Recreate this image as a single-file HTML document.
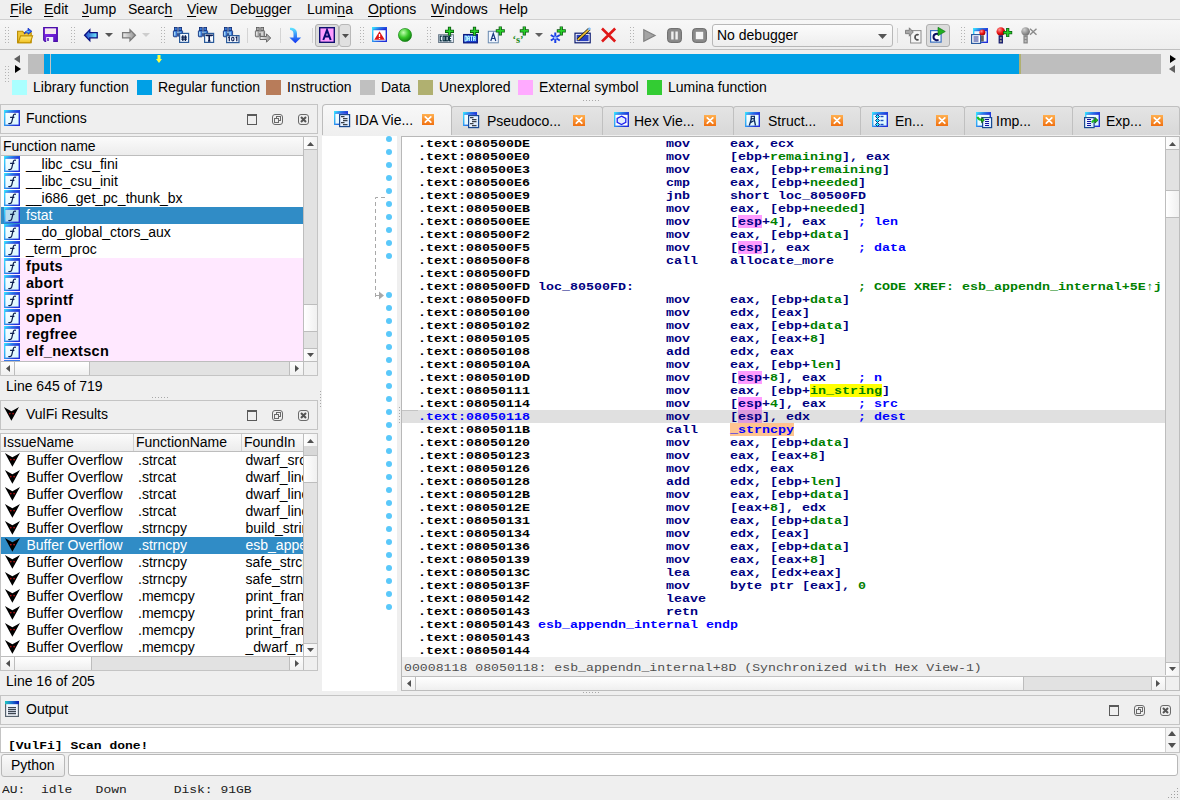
<!DOCTYPE html><html><head><meta charset="utf-8"><title>IDA</title><style>
html,body{margin:0;padding:0}
body{width:1180px;height:800px;background:#efefef;position:relative;overflow:hidden;font-family:"Liberation Sans",sans-serif;font-size:14px}
.t{position:absolute;white-space:pre;line-height:16px}
.b{position:absolute;box-sizing:border-box}
svg{position:absolute;overflow:visible}
.ln{position:absolute;left:0;height:13px;line-height:13px;white-space:pre;font-family:"Liberation Mono",monospace;font-weight:bold;font-size:13.333px;color:#000;transform:scaleY(.82);transform-origin:0 10px}
.mn,.op{color:#000080}.gv{color:#008000}.cm{color:#0000ff}.xr{color:#008000}.en{color:#0000ff}
.hl,.hl2{color:#000080}.yl{color:#008000}.or{color:#0000ff}
.cur{color:#0000ff}
u{text-decoration:underline;text-decoration-thickness:1px;text-underline-offset:1.5px}
</style></head><body>
<svg width="0" height="0" style="position:absolute"><defs>
<linearGradient id="winb" x1="0" y1="0" x2="1" y2="0.4"><stop offset="0" stop-color="#38e0ff"/><stop offset=".5" stop-color="#2a78e8"/><stop offset="1" stop-color="#2030d8"/></linearGradient>
<linearGradient id="winf" x1="0" y1="0" x2="1" y2="1"><stop offset="0" stop-color="#ffffff"/><stop offset="1" stop-color="#d4f6ff"/></linearGradient>
<linearGradient id="docf" x1="0" y1="0" x2="1" y2="1"><stop offset="0" stop-color="#ffffff"/><stop offset="1" stop-color="#cfe4ff"/></linearGradient>
<linearGradient id="arb" x1="0" y1="0" x2="1" y2="0"><stop offset="0" stop-color="#2040c8"/><stop offset="1" stop-color="#70f0ff"/></linearGradient>
<linearGradient id="arg" x1="0" y1="0" x2="1" y2="0"><stop offset="0" stop-color="#f0f0f0"/><stop offset="1" stop-color="#909090"/></linearGradient>
<linearGradient id="cls" x1="0" y1="0" x2="0" y2="1"><stop offset="0" stop-color="#ffb050"/><stop offset="1" stop-color="#f07010"/></linearGradient>
<linearGradient id="fold" x1="0" y1="0" x2="0" y2="1"><stop offset="0" stop-color="#ffec80"/><stop offset="1" stop-color="#f0c020"/></linearGradient>
<linearGradient id="sav" x1="0" y1="0" x2="1" y2="1"><stop offset="0" stop-color="#8a30f0"/><stop offset="1" stop-color="#5a10c0"/></linearGradient>
<linearGradient id="dwn" x1="0" y1="0" x2="0" y2="1"><stop offset="0" stop-color="#60e8ff"/><stop offset="1" stop-color="#1030f0"/></linearGradient>
<radialGradient id="grn" cx=".38" cy=".32" r=".7"><stop offset="0" stop-color="#c0ffb0"/><stop offset=".55" stop-color="#38c828"/><stop offset="1" stop-color="#108010"/></radialGradient>
<radialGradient id="red" cx=".35" cy=".3" r=".7"><stop offset="0" stop-color="#ff9090"/><stop offset=".6" stop-color="#e81010"/><stop offset="1" stop-color="#a00000"/></radialGradient>
<radialGradient id="gry" cx=".35" cy=".3" r=".7"><stop offset="0" stop-color="#d0d0d0"/><stop offset="1" stop-color="#707070"/></radialGradient>
</defs></svg>
<div class="b" style="left:0px;top:19px;width:1180px;height:1px;background:#d0d0d0"></div>
<div class="t" style="left:10px;top:1.15px;font-size:14px;color:#000;font-weight:normal;font-family:'Liberation Sans', sans-serif;"><u>F</u>ile</div>
<div class="t" style="left:44px;top:1.15px;font-size:14px;color:#000;font-weight:normal;font-family:'Liberation Sans', sans-serif;"><u>E</u>dit</div>
<div class="t" style="left:82px;top:1.15px;font-size:14px;color:#000;font-weight:normal;font-family:'Liberation Sans', sans-serif;"><u>J</u>ump</div>
<div class="t" style="left:128px;top:1.15px;font-size:14px;color:#000;font-weight:normal;font-family:'Liberation Sans', sans-serif;">Searc<u>h</u></div>
<div class="t" style="left:187px;top:1.15px;font-size:14px;color:#000;font-weight:normal;font-family:'Liberation Sans', sans-serif;"><u>V</u>iew</div>
<div class="t" style="left:230px;top:1.15px;font-size:14px;color:#000;font-weight:normal;font-family:'Liberation Sans', sans-serif;">Deb<u>u</u>gger</div>
<div class="t" style="left:307px;top:1.15px;font-size:14px;color:#000;font-weight:normal;font-family:'Liberation Sans', sans-serif;">Lumi<u>n</u>a</div>
<div class="t" style="left:368px;top:1.15px;font-size:14px;color:#000;font-weight:normal;font-family:'Liberation Sans', sans-serif;"><u>O</u>ptions</div>
<div class="t" style="left:431px;top:1.15px;font-size:14px;color:#000;font-weight:normal;font-family:'Liberation Sans', sans-serif;"><u>W</u>indows</div>
<div class="t" style="left:499px;top:1.15px;font-size:14px;color:#000;font-weight:normal;font-family:'Liberation Sans', sans-serif;">Help</div>
<div class="b" style="left:0px;top:20px;width:1180px;height:29px;background:linear-gradient(#f7f7f7,#eeeeee)"></div>
<div class="b" style="left:0px;top:49px;width:1180px;height:1px;background:#bfbfbf"></div>
<div class="b" style="left:5px;top:27px;width:1px;height:1px;background:#b4b4b4"></div>
<div class="b" style="left:8px;top:27px;width:1px;height:1px;background:#b4b4b4"></div>
<div class="b" style="left:5px;top:30px;width:1px;height:1px;background:#b4b4b4"></div>
<div class="b" style="left:8px;top:30px;width:1px;height:1px;background:#b4b4b4"></div>
<div class="b" style="left:5px;top:33px;width:1px;height:1px;background:#b4b4b4"></div>
<div class="b" style="left:8px;top:33px;width:1px;height:1px;background:#b4b4b4"></div>
<div class="b" style="left:5px;top:36px;width:1px;height:1px;background:#b4b4b4"></div>
<div class="b" style="left:8px;top:36px;width:1px;height:1px;background:#b4b4b4"></div>
<div class="b" style="left:5px;top:39px;width:1px;height:1px;background:#b4b4b4"></div>
<div class="b" style="left:8px;top:39px;width:1px;height:1px;background:#b4b4b4"></div>
<div class="b" style="left:5px;top:42px;width:1px;height:1px;background:#b4b4b4"></div>
<div class="b" style="left:8px;top:42px;width:1px;height:1px;background:#b4b4b4"></div>
<div class="b" style="left:71px;top:27px;width:1px;height:1px;background:#b4b4b4"></div>
<div class="b" style="left:74px;top:27px;width:1px;height:1px;background:#b4b4b4"></div>
<div class="b" style="left:71px;top:30px;width:1px;height:1px;background:#b4b4b4"></div>
<div class="b" style="left:74px;top:30px;width:1px;height:1px;background:#b4b4b4"></div>
<div class="b" style="left:71px;top:33px;width:1px;height:1px;background:#b4b4b4"></div>
<div class="b" style="left:74px;top:33px;width:1px;height:1px;background:#b4b4b4"></div>
<div class="b" style="left:71px;top:36px;width:1px;height:1px;background:#b4b4b4"></div>
<div class="b" style="left:74px;top:36px;width:1px;height:1px;background:#b4b4b4"></div>
<div class="b" style="left:71px;top:39px;width:1px;height:1px;background:#b4b4b4"></div>
<div class="b" style="left:74px;top:39px;width:1px;height:1px;background:#b4b4b4"></div>
<div class="b" style="left:71px;top:42px;width:1px;height:1px;background:#b4b4b4"></div>
<div class="b" style="left:74px;top:42px;width:1px;height:1px;background:#b4b4b4"></div>
<div class="b" style="left:161px;top:27px;width:1px;height:1px;background:#b4b4b4"></div>
<div class="b" style="left:164px;top:27px;width:1px;height:1px;background:#b4b4b4"></div>
<div class="b" style="left:161px;top:30px;width:1px;height:1px;background:#b4b4b4"></div>
<div class="b" style="left:164px;top:30px;width:1px;height:1px;background:#b4b4b4"></div>
<div class="b" style="left:161px;top:33px;width:1px;height:1px;background:#b4b4b4"></div>
<div class="b" style="left:164px;top:33px;width:1px;height:1px;background:#b4b4b4"></div>
<div class="b" style="left:161px;top:36px;width:1px;height:1px;background:#b4b4b4"></div>
<div class="b" style="left:164px;top:36px;width:1px;height:1px;background:#b4b4b4"></div>
<div class="b" style="left:161px;top:39px;width:1px;height:1px;background:#b4b4b4"></div>
<div class="b" style="left:164px;top:39px;width:1px;height:1px;background:#b4b4b4"></div>
<div class="b" style="left:161px;top:42px;width:1px;height:1px;background:#b4b4b4"></div>
<div class="b" style="left:164px;top:42px;width:1px;height:1px;background:#b4b4b4"></div>
<div class="b" style="left:360px;top:27px;width:1px;height:1px;background:#b4b4b4"></div>
<div class="b" style="left:363px;top:27px;width:1px;height:1px;background:#b4b4b4"></div>
<div class="b" style="left:360px;top:30px;width:1px;height:1px;background:#b4b4b4"></div>
<div class="b" style="left:363px;top:30px;width:1px;height:1px;background:#b4b4b4"></div>
<div class="b" style="left:360px;top:33px;width:1px;height:1px;background:#b4b4b4"></div>
<div class="b" style="left:363px;top:33px;width:1px;height:1px;background:#b4b4b4"></div>
<div class="b" style="left:360px;top:36px;width:1px;height:1px;background:#b4b4b4"></div>
<div class="b" style="left:363px;top:36px;width:1px;height:1px;background:#b4b4b4"></div>
<div class="b" style="left:360px;top:39px;width:1px;height:1px;background:#b4b4b4"></div>
<div class="b" style="left:363px;top:39px;width:1px;height:1px;background:#b4b4b4"></div>
<div class="b" style="left:360px;top:42px;width:1px;height:1px;background:#b4b4b4"></div>
<div class="b" style="left:363px;top:42px;width:1px;height:1px;background:#b4b4b4"></div>
<div class="b" style="left:427px;top:27px;width:1px;height:1px;background:#b4b4b4"></div>
<div class="b" style="left:430px;top:27px;width:1px;height:1px;background:#b4b4b4"></div>
<div class="b" style="left:427px;top:30px;width:1px;height:1px;background:#b4b4b4"></div>
<div class="b" style="left:430px;top:30px;width:1px;height:1px;background:#b4b4b4"></div>
<div class="b" style="left:427px;top:33px;width:1px;height:1px;background:#b4b4b4"></div>
<div class="b" style="left:430px;top:33px;width:1px;height:1px;background:#b4b4b4"></div>
<div class="b" style="left:427px;top:36px;width:1px;height:1px;background:#b4b4b4"></div>
<div class="b" style="left:430px;top:36px;width:1px;height:1px;background:#b4b4b4"></div>
<div class="b" style="left:427px;top:39px;width:1px;height:1px;background:#b4b4b4"></div>
<div class="b" style="left:430px;top:39px;width:1px;height:1px;background:#b4b4b4"></div>
<div class="b" style="left:427px;top:42px;width:1px;height:1px;background:#b4b4b4"></div>
<div class="b" style="left:430px;top:42px;width:1px;height:1px;background:#b4b4b4"></div>
<div class="b" style="left:630px;top:27px;width:1px;height:1px;background:#b4b4b4"></div>
<div class="b" style="left:633px;top:27px;width:1px;height:1px;background:#b4b4b4"></div>
<div class="b" style="left:630px;top:30px;width:1px;height:1px;background:#b4b4b4"></div>
<div class="b" style="left:633px;top:30px;width:1px;height:1px;background:#b4b4b4"></div>
<div class="b" style="left:630px;top:33px;width:1px;height:1px;background:#b4b4b4"></div>
<div class="b" style="left:633px;top:33px;width:1px;height:1px;background:#b4b4b4"></div>
<div class="b" style="left:630px;top:36px;width:1px;height:1px;background:#b4b4b4"></div>
<div class="b" style="left:633px;top:36px;width:1px;height:1px;background:#b4b4b4"></div>
<div class="b" style="left:630px;top:39px;width:1px;height:1px;background:#b4b4b4"></div>
<div class="b" style="left:633px;top:39px;width:1px;height:1px;background:#b4b4b4"></div>
<div class="b" style="left:630px;top:42px;width:1px;height:1px;background:#b4b4b4"></div>
<div class="b" style="left:633px;top:42px;width:1px;height:1px;background:#b4b4b4"></div>
<div class="b" style="left:961px;top:27px;width:1px;height:1px;background:#b4b4b4"></div>
<div class="b" style="left:964px;top:27px;width:1px;height:1px;background:#b4b4b4"></div>
<div class="b" style="left:961px;top:30px;width:1px;height:1px;background:#b4b4b4"></div>
<div class="b" style="left:964px;top:30px;width:1px;height:1px;background:#b4b4b4"></div>
<div class="b" style="left:961px;top:33px;width:1px;height:1px;background:#b4b4b4"></div>
<div class="b" style="left:964px;top:33px;width:1px;height:1px;background:#b4b4b4"></div>
<div class="b" style="left:961px;top:36px;width:1px;height:1px;background:#b4b4b4"></div>
<div class="b" style="left:964px;top:36px;width:1px;height:1px;background:#b4b4b4"></div>
<div class="b" style="left:961px;top:39px;width:1px;height:1px;background:#b4b4b4"></div>
<div class="b" style="left:964px;top:39px;width:1px;height:1px;background:#b4b4b4"></div>
<div class="b" style="left:961px;top:42px;width:1px;height:1px;background:#b4b4b4"></div>
<div class="b" style="left:964px;top:42px;width:1px;height:1px;background:#b4b4b4"></div>
<div class="b" style="left:247px;top:28px;width:1px;height:15px;background:#d4d4d4"></div>
<div class="b" style="left:280px;top:28px;width:1px;height:15px;background:#d4d4d4"></div>
<div class="b" style="left:312px;top:28px;width:1px;height:15px;background:#d4d4d4"></div>
<div class="b" style="left:897px;top:28px;width:1px;height:15px;background:#d4d4d4"></div>
<svg style="left:17px;top:27px" width="17" height="17" viewBox="0 0 17 17"><path d="M0.6 4.3h5l1.2 1.5h7.4v10H0.6z" fill="#f0c838" stroke="#b88a00" stroke-width="1.1"/><path d="M3.6 8.9h12l-2.3 6.9H1.2z" fill="url(#fold)" stroke="#c09000" stroke-width="1.1"/><path d="M7.3 7C7.5 4.8 9.2 3.8 11 3.8V1.2L14.9 4.3L11 7.3V5.6C9.5 5.6 8.3 6 7.3 7z" fill="#2a60f0" stroke="#0a20b8" stroke-width=".7"/><path d="M9.5 4.8h3" stroke="#70f0ff" stroke-width="1"/></svg>
<svg style="left:43px;top:27px" width="15" height="15" viewBox="0 0 15 15"><path d="M0.7 0.7H14.3V14.3H2L0.7 13z" fill="url(#sav)" stroke="#4a10a8" stroke-width="1.2"/><rect x="2" y="1.4" width="11" height="5.6" fill="#f6e8ec"/><rect x="3.2" y="10" width="7" height="5" fill="#eef0fa"/><rect x="4.2" y="11" width="1.6" height="3" fill="#5a20b0"/></svg>
<svg style="left:84px;top:29px" width="14" height="13" viewBox="0 0 14 13"><path d="M0.6 6.2L5.8 0.8V3.6H13.2V8.8H5.8V11.6Z" fill="url(#arb)" stroke="#0a1080" stroke-width="1.3"/></svg>
<svg style="left:105px;top:33px" width="8" height="4" viewBox="0 0 8 4"><path d="M0 0h8L4 4z" fill="#555"/></svg>
<svg style="left:122px;top:29px" width="14" height="13" viewBox="0 0 14 13"><path d="M13.4 6.2L8 0.8V3.6H0.6V8.8H8V11.6Z" fill="url(#arg)" stroke="#7a7a7a" stroke-width="1.3"/></svg>
<svg style="left:142px;top:33px" width="8" height="4" viewBox="0 0 8 4"><path d="M0 0h8L4 4z" fill="#cdcdcd"/></svg>
<svg style="left:173px;top:27px" width="17" height="17" viewBox="0 0 17 17"><rect x="1.4" y="0.4" width="2.8" height="3.2" fill="#3a78d8" stroke="#0e2a70" stroke-width=".8"/><rect x="5.8" y="0.4" width="2.8" height="3.2" fill="#3a78d8" stroke="#0e2a70" stroke-width=".8"/><rect x="0.4" y="3.6" width="4" height="6.2" rx=".8" fill="#3a78d8" stroke="#0e2a70" stroke-width=".8"/><rect x="5.6" y="3.6" width="4" height="6.2" rx=".8" fill="#3a78d8" stroke="#0e2a70" stroke-width=".8"/><rect x="1.2" y="4.8" width="1.2" height="3.8" fill="#b8ecff"/><rect x="6.4" y="4.8" width="1.2" height="3.8" fill="#b8ecff"/><rect x="4.4" y="4.6" width="1.2" height="1.6" fill="#b8ecff"/><rect x="6.6" y="6.4" width="9" height="9" fill="#f2f8ff" stroke="#2a5a9a" stroke-width="1.2"/><path d="M9.8 8.3V14M12.4 8.3V14M8.3 10.2h5.6M8.3 12.2h5.6" stroke="#0a2050" stroke-width="1.3"/></svg>
<svg style="left:198px;top:27px" width="17" height="17" viewBox="0 0 17 17"><rect x="1.4" y="0.4" width="2.8" height="3.2" fill="#3a78d8" stroke="#0e2a70" stroke-width=".8"/><rect x="5.8" y="0.4" width="2.8" height="3.2" fill="#3a78d8" stroke="#0e2a70" stroke-width=".8"/><rect x="0.4" y="3.6" width="4" height="6.2" rx=".8" fill="#3a78d8" stroke="#0e2a70" stroke-width=".8"/><rect x="5.6" y="3.6" width="4" height="6.2" rx=".8" fill="#3a78d8" stroke="#0e2a70" stroke-width=".8"/><rect x="1.2" y="4.8" width="1.2" height="3.8" fill="#b8ecff"/><rect x="6.4" y="4.8" width="1.2" height="3.8" fill="#b8ecff"/><rect x="4.4" y="4.6" width="1.2" height="1.6" fill="#b8ecff"/><rect x="6.6" y="6.4" width="9" height="9" fill="#f2f8ff" stroke="#2a5a9a" stroke-width="1.2"/><path d="M8.3 8.9V8.4h5.8v.5M11.2 8.4v5.6M10 14h2.4" fill="none" stroke="#0a1a50" stroke-width="1.6"/></svg>
<svg style="left:223px;top:27px" width="17" height="17" viewBox="0 0 17 17"><rect x="1.4" y="0.4" width="2.8" height="3.2" fill="#3a78d8" stroke="#0e2a70" stroke-width=".8"/><rect x="5.8" y="0.4" width="2.8" height="3.2" fill="#3a78d8" stroke="#0e2a70" stroke-width=".8"/><rect x="0.4" y="3.6" width="4" height="6.2" rx=".8" fill="#3a78d8" stroke="#0e2a70" stroke-width=".8"/><rect x="5.6" y="3.6" width="4" height="6.2" rx=".8" fill="#3a78d8" stroke="#0e2a70" stroke-width=".8"/><rect x="1.2" y="4.8" width="1.2" height="3.8" fill="#b8ecff"/><rect x="6.4" y="4.8" width="1.2" height="3.8" fill="#b8ecff"/><rect x="4.4" y="4.6" width="1.2" height="1.6" fill="#b8ecff"/><rect x="3.6" y="8.6" width="12.4" height="7" fill="#f2f8ff" stroke="#2a5a9a" stroke-width="1.2"/><path d="M5.2 10.6L6.3 10V14.2M12.7 10.6L13.8 10V14.2" fill="none" stroke="#0a1a50" stroke-width="1.2"/><ellipse cx="9.8" cy="12.1" rx="1.2" ry="1.9" fill="none" stroke="#0a1a50" stroke-width="1.1"/></svg>
<svg style="left:255px;top:27px" width="17" height="17" viewBox="0 0 17 17"><rect x="1.4" y="0.4" width="2.8" height="3.2" fill="#a8a8a8" stroke="#5a5a5a" stroke-width=".8"/><rect x="5.8" y="0.4" width="2.8" height="3.2" fill="#a8a8a8" stroke="#5a5a5a" stroke-width=".8"/><rect x="0.4" y="3.6" width="4" height="6.2" rx=".8" fill="#a8a8a8" stroke="#5a5a5a" stroke-width=".8"/><rect x="5.6" y="3.6" width="4" height="6.2" rx=".8" fill="#a8a8a8" stroke="#5a5a5a" stroke-width=".8"/><rect x="1.2" y="4.8" width="1.2" height="3.8" fill="#f0f0f0"/><rect x="6.4" y="4.8" width="1.2" height="3.8" fill="#f0f0f0"/><rect x="4.4" y="4.6" width="1.2" height="1.6" fill="#f0f0f0"/><path d="M5 9.5h6.5V6.8L15.7 11L11.5 15.2V12.5H5z" fill="url(#arg)" stroke="#6a6a6a" stroke-width="1"/></svg>
<svg style="left:289px;top:27px" width="13" height="17" viewBox="0 0 13 17"><path d="M1 0.8C5.5 0.8 8 2.8 8 6.5V10.5H12.2L6.3 16.2L0.4 10.5H4.5V7C4.5 4.5 3.3 3 1 2.8z" fill="url(#dwn)"/></svg>
<div class="b" style="left:315px;top:24px;width:24px;height:23px;background:#dcdcdc;border:1px solid #b0b0b0;border-radius:3px"></div>
<svg style="left:319px;top:27px" width="16" height="16" viewBox="0 0 16 16"><rect x="0.7" y="0.7" width="14.6" height="14.6" fill="#ff9cff" stroke="#101070" stroke-width="1.4"/><path d="M4.3 13L8 3.2L11.7 13M5.7 9.6h4.6" fill="none" stroke="#0a0a70" stroke-width="2"/></svg>
<div class="b" style="left:339px;top:24px;width:12px;height:23px;background:#e0e0e0;border:1px solid #b8b8b8;border-radius:3px"></div>
<svg style="left:342px;top:34px" width="7" height="4" viewBox="0 0 7 4"><path d="M0 0h7L3.5 4z" fill="#505050"/></svg>
<svg style="left:372px;top:27px" width="15" height="15" viewBox="0 0 15 15"><rect x="0.7" y="0.7" width="13.6" height="13.6" fill="#fff" stroke="url(#winb)" stroke-width="1.4"/><rect x="1" y="1" width="13" height="2.2" fill="url(#winb)"/><path d="M7.5 4.3L12.8 12.8H2.2z" fill="#e01818"/><path d="M7.5 7v3M7.5 11v1" stroke="#fff" stroke-width="1.3"/></svg>
<svg style="left:398px;top:28px" width="14" height="14" viewBox="0 0 14 14"><circle cx="7" cy="7" r="6.6" fill="url(#grn)" stroke="#108010" stroke-width=".6"/></svg>
<svg style="left:437px;top:27px" width="18" height="17" viewBox="0 0 18 17"><rect x="1.6" y="7.7" width="14.8" height="7.8" fill="#eef4ff" stroke="#6a7a88" stroke-width="1"/><path d="M4.9 9.1H3.2V13.9H4.9M6.1 9.1H8V13.9H6.1ZM9 9.1H10.4Q11.2 9.1 11.2 10V13Q11.2 13.9 10.4 13.9H9ZM14.4 9.1H12.4V13.9H14.4M12.4 11.5H14" fill="none" stroke="#0a3040" stroke-width="1.2"/><path d="M12.5 -0.20000000000000018v9M8.0 4.3h9" stroke="#0a5a10" stroke-width="3.2"/><path d="M12.5 0.5v7.6M8.7 4.3h7.6" stroke="#28d028" stroke-width="1.6"/></svg>
<svg style="left:462px;top:27px" width="18" height="17" viewBox="0 0 18 17"><rect x="1.7" y="7.6" width="13.6" height="8.2" fill="#1a40d0" stroke="#0a1a80" stroke-width="1.3"/><path d="M3 9.1V13.9H3.9Q4.7 13.9 4.7 13V10Q4.7 9.1 3.9 9.1ZM5.8 13.9V10Q5.8 9.1 6.6 9.1Q7.4 9.1 7.4 10V13.9M5.8 11.6H7.4M8.3 9.2H10.7M9.5 9.2V13.9M11.6 13.9V10Q11.6 9.1 12.4 9.1Q13.2 9.1 13.2 10V13.9M11.6 11.6H13.2" fill="none" stroke="#b0f4ff" stroke-width="1.1"/><path d="M12.5 -0.20000000000000018v9M8.0 4.3h9" stroke="#0a5a10" stroke-width="3.2"/><path d="M12.5 0.5v7.6M8.7 4.3h7.6" stroke="#28d028" stroke-width="1.6"/></svg>
<svg style="left:487px;top:27px" width="18" height="17" viewBox="0 0 18 17"><rect x="1.3" y="4.3" width="10" height="11.5" fill="#f0f6ff" stroke="#6a8ab0" stroke-width="1"/><path d="M3.8 14L6.3 6.5L8.8 14M4.6 11.5h3.4" fill="none" stroke="#1a3a80" stroke-width="1.2"/><path d="M13.3 -0.6000000000000001v9M8.8 3.9h9" stroke="#0a5a10" stroke-width="3.2"/><path d="M13.3 0.10000000000000009v7.6M9.5 3.9h7.6" stroke="#28d028" stroke-width="1.6"/></svg>
<svg style="left:512px;top:27px" width="18" height="17" viewBox="0 0 18 17"><text x="6" y="15.6" font-size="10.5" font-family="Liberation Serif" font-weight="bold" text-anchor="middle" fill="#208a20">‘s’</text><path d="M12.3 -0.6000000000000001v9M7.800000000000001 3.9h9" stroke="#0a5a10" stroke-width="3.2"/><path d="M12.3 0.10000000000000009v7.6M8.5 3.9h7.6" stroke="#28d028" stroke-width="1.6"/></svg>
<svg style="left:535px;top:33px" width="8" height="4" viewBox="0 0 8 4"><path d="M0 0h8L4 4z" fill="#606060"/></svg>
<svg style="left:549px;top:27px" width="18" height="17" viewBox="0 0 18 17"><path d="M6.3 5.5v10.5M1.8 8l9 5.5M1.8 13.5l9-5.5" stroke="#1a40e8" stroke-width="2"/><circle cx="6.3" cy="10.8" r="1.5" fill="#a0c0ff"/><path d="M12.3 -0.6000000000000001v9M7.800000000000001 3.9h9" stroke="#0a5a10" stroke-width="3.2"/><path d="M12.3 0.10000000000000009v7.6M8.5 3.9h7.6" stroke="#28d028" stroke-width="1.6"/></svg>
<svg style="left:574px;top:27px" width="18" height="17" viewBox="0 0 18 17"><rect x="1" y="6.2" width="15.2" height="9.6" fill="#fff" stroke="#0a1a70" stroke-width="1.2"/><rect x="2.6" y="7.8" width="12" height="6.4" fill="#2a40c0"/><path d="M3.8 12.8L15.5 1.8" stroke="#101010" stroke-width="3"/><path d="M3.8 12.8L15.5 1.8" stroke="#f0c030" stroke-width="1.8"/><path d="M14.2 3L16.3 1" stroke="#80c0ff" stroke-width="2"/></svg>
<svg style="left:600px;top:27px" width="17" height="16" viewBox="0 0 17 16"><path d="M2 1.5L15.2 14.5M15.2 1.5L2 14.5" stroke="#e01818" stroke-width="2.6"/></svg>
<svg style="left:643px;top:29px" width="13" height="13" viewBox="0 0 13 13"><path d="M0.8 0.8L12 6.5L0.8 12.2z" fill="#a4a4a4" stroke="#808080" stroke-width="1.2"/></svg>
<svg style="left:667px;top:28px" width="15" height="15" viewBox="0 0 15 15"><rect x="0.6" y="0.6" width="13.8" height="13.8" rx="3" fill="#8a8a8a" stroke="#6a6a6a"/><rect x="4.2" y="3.5" width="2.4" height="8" fill="#f0f0f0"/><rect x="8.4" y="3.5" width="2.4" height="8" fill="#f0f0f0"/></svg>
<svg style="left:692px;top:28px" width="15" height="15" viewBox="0 0 15 15"><rect x="0.6" y="0.6" width="13.8" height="13.8" rx="3" fill="#8a8a8a" stroke="#6a6a6a"/><rect x="3.8" y="3.8" width="7.4" height="7.4" fill="#f6f6f6"/></svg>
<div class="b" style="left:712px;top:24px;width:181px;height:23px;background:linear-gradient(#fcfcfc,#ededed);border:1px solid #b8b8b8;border-radius:3px"></div>
<div class="t" style="left:717px;top:27.15px;font-size:14px;color:#000;font-weight:normal;font-family:'Liberation Sans', sans-serif;">No debugger</div>
<svg style="left:878px;top:34px" width="9" height="5" viewBox="0 0 9 5"><path d="M0 0h9L4.5 5z" fill="#555"/></svg>
<svg style="left:905px;top:27px" width="17" height="17" viewBox="0 0 17 17"><rect x="5.6" y="3.6" width="10.4" height="12.4" fill="#f6f6f6" stroke="#8a8a8a" stroke-width="1"/><path d="M13.5 8.2C12.8 7.3 10 7.2 10 10.3C10 13.2 12.8 13.2 13.5 12.4" fill="none" stroke="#505050" stroke-width="1.8"/><path d="M0.5 3.3h3.8V0.8L8.3 5L4.3 9.2V6.7H0.5z" fill="#a8a8a8" stroke="#707070" stroke-width=".8"/></svg>
<div class="b" style="left:926px;top:24px;width:24px;height:23px;background:#dcdcdc;border:1px solid #b0b0b0;border-radius:3px"></div>
<svg style="left:930px;top:27px" width="16" height="16" viewBox="0 0 16 16"><rect x="0.6" y="3.6" width="10.5" height="11.5" fill="#fff" stroke="#3a70c0" stroke-width="1.2"/><path d="M8.5 7.5C7.8 6.5 3.5 6.3 3.5 10C3.5 13.5 7.8 13.5 8.5 12.5" fill="none" stroke="#0a1060" stroke-width="2"/><path d="M8 0.3L15.3 4.5L8 8.8z" fill="#20b020" stroke="#0a7010" stroke-width=".6"/></svg>
<svg style="left:971px;top:27px" width="17" height="17" viewBox="0 0 17 17"><rect x="2.7" y="1.7" width="13.6" height="13.6" fill="#f0f8ff" stroke="url(#winb)" stroke-width="1.4"/><rect x="3" y="2" width="13" height="2.2" fill="url(#winb)"/><rect x="0.6" y="7.6" width="9" height="8.8" fill="#fff" stroke="#2a5aa0" stroke-width="1.2"/><path d="M2.5 10h5M2.5 12h5M2.5 14h5" stroke="#1a2a90"/><circle cx="11.4" cy="5.5" r="3" fill="url(#red)"/><rect x="10" y="8.5" width="2.8" height="6" fill="#606060"/></svg>
<svg style="left:996px;top:27px" width="17" height="17" viewBox="0 0 17 17"><circle cx="4.8" cy="4.5" r="4.3" fill="url(#red)"/><rect x="2.6" y="8.3" width="4.4" height="8.2" fill="#1a2070"/><circle cx="4.8" cy="11" r="1.1" fill="#999"/><circle cx="4.8" cy="14.2" r="1.1" fill="#999"/><path d="M11.7 1.0999999999999996v9M7.199999999999999 5.6h9" stroke="#0a5a10" stroke-width="3.2"/><path d="M11.7 1.7999999999999998v7.6M7.8999999999999995 5.6h7.6" stroke="#28d028" stroke-width="1.6"/></svg>
<svg style="left:1021px;top:27px" width="17" height="17" viewBox="0 0 17 17"><circle cx="4.6" cy="4.5" r="4.3" fill="url(#gry)"/><rect x="2.4" y="8.3" width="4.4" height="8.2" fill="#8a8a8a"/><circle cx="4.6" cy="11" r="1.1" fill="#bdbdbd"/><circle cx="4.6" cy="14.2" r="1.1" fill="#bdbdbd"/><path d="M9 1.8l6.5 6M15.5 1.8l-6.5 6" stroke="#8a8a8a" stroke-width="1.4"/></svg>
<div class="b" style="left:5px;top:66px;width:1px;height:1px;background:#b4b4b4"></div>
<div class="b" style="left:8px;top:66px;width:1px;height:1px;background:#b4b4b4"></div>
<div class="b" style="left:5px;top:69px;width:1px;height:1px;background:#b4b4b4"></div>
<div class="b" style="left:8px;top:69px;width:1px;height:1px;background:#b4b4b4"></div>
<div class="b" style="left:5px;top:72px;width:1px;height:1px;background:#b4b4b4"></div>
<div class="b" style="left:8px;top:72px;width:1px;height:1px;background:#b4b4b4"></div>
<div class="b" style="left:5px;top:75px;width:1px;height:1px;background:#b4b4b4"></div>
<div class="b" style="left:8px;top:75px;width:1px;height:1px;background:#b4b4b4"></div>
<div class="b" style="left:5px;top:78px;width:1px;height:1px;background:#b4b4b4"></div>
<div class="b" style="left:8px;top:78px;width:1px;height:1px;background:#b4b4b4"></div>
<div class="b" style="left:5px;top:81px;width:1px;height:1px;background:#b4b4b4"></div>
<div class="b" style="left:8px;top:81px;width:1px;height:1px;background:#b4b4b4"></div>
<svg style="left:14px;top:55px" width="6" height="8" viewBox="0 0 6 8"><path d="M6 0V8L0 4z" fill="#606060"/></svg>
<svg style="left:15px;top:65px" width="6" height="8" viewBox="0 0 6 8"><path d="M0 0V8L6 4z" fill="#000"/></svg>
<div class="b" style="left:28px;top:54px;width:16px;height:20px;background:#bebebe"></div>
<div class="b" style="left:44px;top:54px;width:975px;height:20px;background:#00a0e6"></div>
<div class="b" style="left:50px;top:54px;width:1px;height:20px;background:#c4c4c4"></div>
<div class="b" style="left:43px;top:54px;width:1px;height:20px;background:#c8b8b0"></div>
<div class="b" style="left:1019px;top:54px;width:2px;height:20px;background:#b0b070"></div>
<div class="b" style="left:1021px;top:54px;width:140px;height:20px;background:#bebebe"></div>
<svg style="left:156px;top:55px" width="6" height="8" viewBox="0 0 6 8"><path d="M1.5 0h3v4h1.5L3 8L0 4h1.5z" fill="#ffff40"/></svg>
<svg style="left:1170px;top:55px" width="6" height="8" viewBox="0 0 6 8"><path d="M0 0V8L6 4z" fill="#000"/></svg>
<svg style="left:1169px;top:65px" width="6" height="8" viewBox="0 0 6 8"><path d="M6 0V8L0 4z" fill="#606060"/></svg>
<div class="b" style="left:12px;top:80px;width:15px;height:15px;background:#aaffff"></div>
<div class="t" style="left:33px;top:79.15px;font-size:14px;color:#000;font-weight:normal;font-family:'Liberation Sans', sans-serif;">Library function</div>
<div class="b" style="left:137px;top:80px;width:15px;height:15px;background:#00a0e6"></div>
<div class="t" style="left:158px;top:79.15px;font-size:14px;color:#000;font-weight:normal;font-family:'Liberation Sans', sans-serif;">Regular function</div>
<div class="b" style="left:266px;top:80px;width:15px;height:15px;background:#b87c5a"></div>
<div class="t" style="left:287px;top:79.15px;font-size:14px;color:#000;font-weight:normal;font-family:'Liberation Sans', sans-serif;">Instruction</div>
<div class="b" style="left:360px;top:80px;width:15px;height:15px;background:#c0c0c0"></div>
<div class="t" style="left:381px;top:79.15px;font-size:14px;color:#000;font-weight:normal;font-family:'Liberation Sans', sans-serif;">Data</div>
<div class="b" style="left:418px;top:80px;width:15px;height:15px;background:#b0b070"></div>
<div class="t" style="left:439px;top:79.15px;font-size:14px;color:#000;font-weight:normal;font-family:'Liberation Sans', sans-serif;">Unexplored</div>
<div class="b" style="left:518px;top:80px;width:15px;height:15px;background:#ffaaff"></div>
<div class="t" style="left:539px;top:79.15px;font-size:14px;color:#000;font-weight:normal;font-family:'Liberation Sans', sans-serif;">External symbol</div>
<div class="b" style="left:647px;top:80px;width:15px;height:15px;background:#33cc33"></div>
<div class="t" style="left:668px;top:79.15px;font-size:14px;color:#000;font-weight:normal;font-family:'Liberation Sans', sans-serif;">Lumina function</div>
<div class="b" style="left:0px;top:104px;width:318px;height:30px;background:#efefef;border:1px solid #c4c4c4"></div>
<svg style="left:4px;top:110px" width="16" height="16" viewBox="0 0 16 16"><rect x="0.7" y="0.7" width="14.6" height="14.6" fill="url(#winf)" stroke="url(#winb)" stroke-width="1.4"/><rect x="1" y="1" width="14" height="1.8" fill="url(#winb)"/><path d="M11.9 4.4C10.7 3.7 9.7 4.3 9.4 5.4L7.7 12.1C7.4 13.3 6.2 13.8 4.3 13.5M6.1 7.4H10.4" fill="none" stroke="#0e2050" stroke-width="1.25"/></svg>
<div class="t" style="left:26px;top:110.15px;font-size:14px;color:#000;font-weight:normal;font-family:'Liberation Sans', sans-serif;">Functions</div>
<svg style="left:247px;top:114px" width="10" height="11" viewBox="0 0 10 11"><rect x="0.5" y="0.5" width="9" height="10" fill="none" stroke="#5a5a5a"/><rect x="0" y="0" width="10" height="2" fill="#5a5a5a"/></svg><svg style="left:272px;top:114px" width="11" height="11" viewBox="0 0 11 11"><rect x="0.5" y="0.5" width="10" height="10" rx="2.5" fill="none" stroke="#6a6a6a"/><rect x="4.5" y="2.5" width="4" height="4" fill="none" stroke="#6a6a6a"/><rect x="2.5" y="4.5" width="4" height="4" fill="#efefef" stroke="#6a6a6a"/></svg><svg style="left:298px;top:114px" width="11" height="11" viewBox="0 0 11 11"><rect x="0.5" y="0.5" width="10" height="10" rx="2.5" fill="none" stroke="#6a6a6a"/><path d="M3 3L8 8M8 3L3 8" stroke="#555" stroke-width="2"/></svg>
<div class="b" style="left:0px;top:136px;width:318px;height:240px;background:#fff;border:1px solid #c4c4c4"></div>
<div class="b" style="left:1px;top:137px;width:303px;height:19px;background:linear-gradient(#fbfbfb,#ececec);border-bottom:1px solid #bdbdbd"></div>
<div class="t" style="left:3px;top:138.15px;font-size:14px;color:#000;font-weight:normal;font-family:'Liberation Sans', sans-serif;">Function name</div>
<svg style="left:4px;top:156px" width="16" height="16" viewBox="0 0 16 16"><rect x="0.7" y="0.7" width="14.6" height="14.6" fill="url(#winf)" stroke="url(#winb)" stroke-width="1.4"/><rect x="1" y="1" width="14" height="1.8" fill="url(#winb)"/><path d="M11.9 4.4C10.7 3.7 9.7 4.3 9.4 5.4L7.7 12.1C7.4 13.3 6.2 13.8 4.3 13.5M6.1 7.4H10.4" fill="none" stroke="#0e2050" stroke-width="1.25"/></svg>
<div class="t" style="left:26px;top:156.15px;font-size:14px;color:#000;font-weight:normal;font-family:'Liberation Sans', sans-serif;">__libc_csu_fini</div>
<svg style="left:4px;top:173px" width="16" height="16" viewBox="0 0 16 16"><rect x="0.7" y="0.7" width="14.6" height="14.6" fill="url(#winf)" stroke="url(#winb)" stroke-width="1.4"/><rect x="1" y="1" width="14" height="1.8" fill="url(#winb)"/><path d="M11.9 4.4C10.7 3.7 9.7 4.3 9.4 5.4L7.7 12.1C7.4 13.3 6.2 13.8 4.3 13.5M6.1 7.4H10.4" fill="none" stroke="#0e2050" stroke-width="1.25"/></svg>
<div class="t" style="left:26px;top:173.15px;font-size:14px;color:#000;font-weight:normal;font-family:'Liberation Sans', sans-serif;">__libc_csu_init</div>
<svg style="left:4px;top:190px" width="16" height="16" viewBox="0 0 16 16"><rect x="0.7" y="0.7" width="14.6" height="14.6" fill="url(#winf)" stroke="url(#winb)" stroke-width="1.4"/><rect x="1" y="1" width="14" height="1.8" fill="url(#winb)"/><path d="M11.9 4.4C10.7 3.7 9.7 4.3 9.4 5.4L7.7 12.1C7.4 13.3 6.2 13.8 4.3 13.5M6.1 7.4H10.4" fill="none" stroke="#0e2050" stroke-width="1.25"/></svg>
<div class="t" style="left:26px;top:190.15px;font-size:14px;color:#000;font-weight:normal;font-family:'Liberation Sans', sans-serif;">__i686_get_pc_thunk_bx</div>
<div class="b" style="left:1px;top:207px;width:303px;height:17px;background:#308cc6"></div>
<svg style="left:4px;top:207px" width="16" height="16" viewBox="0 0 16 16"><rect x="0.7" y="0.7" width="14.6" height="14.6" fill="#b8dcee" stroke="url(#winb)" stroke-width="1.4"/><rect x="1" y="1" width="14" height="1.8" fill="url(#winb)"/><path d="M11.9 4.4C10.7 3.7 9.7 4.3 9.4 5.4L7.7 12.1C7.4 13.3 6.2 13.8 4.3 13.5M6.1 7.4H10.4" fill="none" stroke="#0e2050" stroke-width="1.25"/></svg>
<div class="t" style="left:26px;top:207.15px;font-size:14px;color:#fff;font-weight:normal;font-family:'Liberation Sans', sans-serif;">fstat</div>
<svg style="left:4px;top:224px" width="16" height="16" viewBox="0 0 16 16"><rect x="0.7" y="0.7" width="14.6" height="14.6" fill="url(#winf)" stroke="url(#winb)" stroke-width="1.4"/><rect x="1" y="1" width="14" height="1.8" fill="url(#winb)"/><path d="M11.9 4.4C10.7 3.7 9.7 4.3 9.4 5.4L7.7 12.1C7.4 13.3 6.2 13.8 4.3 13.5M6.1 7.4H10.4" fill="none" stroke="#0e2050" stroke-width="1.25"/></svg>
<div class="t" style="left:26px;top:224.15px;font-size:14px;color:#000;font-weight:normal;font-family:'Liberation Sans', sans-serif;">__do_global_ctors_aux</div>
<svg style="left:4px;top:241px" width="16" height="16" viewBox="0 0 16 16"><rect x="0.7" y="0.7" width="14.6" height="14.6" fill="url(#winf)" stroke="url(#winb)" stroke-width="1.4"/><rect x="1" y="1" width="14" height="1.8" fill="url(#winb)"/><path d="M11.9 4.4C10.7 3.7 9.7 4.3 9.4 5.4L7.7 12.1C7.4 13.3 6.2 13.8 4.3 13.5M6.1 7.4H10.4" fill="none" stroke="#0e2050" stroke-width="1.25"/></svg>
<div class="t" style="left:26px;top:241.15px;font-size:14px;color:#000;font-weight:normal;font-family:'Liberation Sans', sans-serif;">_term_proc</div>
<div class="b" style="left:1px;top:258px;width:303px;height:17px;background:#ffe8ff"></div>
<svg style="left:4px;top:258px" width="16" height="16" viewBox="0 0 16 16"><rect x="0.7" y="0.7" width="14.6" height="14.6" fill="url(#winf)" stroke="url(#winb)" stroke-width="1.4"/><rect x="1" y="1" width="14" height="1.8" fill="url(#winb)"/><path d="M11.9 4.4C10.7 3.7 9.7 4.3 9.4 5.4L7.7 12.1C7.4 13.3 6.2 13.8 4.3 13.5M6.1 7.4H10.4" fill="none" stroke="#0e2050" stroke-width="1.25"/></svg>
<div class="t" style="left:26px;top:257.98px;font-size:14.5px;color:#000;font-weight:bold;font-family:'Liberation Sans', sans-serif;letter-spacing:.3px">fputs</div>
<div class="b" style="left:1px;top:275px;width:303px;height:17px;background:#ffe8ff"></div>
<svg style="left:4px;top:275px" width="16" height="16" viewBox="0 0 16 16"><rect x="0.7" y="0.7" width="14.6" height="14.6" fill="url(#winf)" stroke="url(#winb)" stroke-width="1.4"/><rect x="1" y="1" width="14" height="1.8" fill="url(#winb)"/><path d="M11.9 4.4C10.7 3.7 9.7 4.3 9.4 5.4L7.7 12.1C7.4 13.3 6.2 13.8 4.3 13.5M6.1 7.4H10.4" fill="none" stroke="#0e2050" stroke-width="1.25"/></svg>
<div class="t" style="left:26px;top:274.98px;font-size:14.5px;color:#000;font-weight:bold;font-family:'Liberation Sans', sans-serif;letter-spacing:.3px">abort</div>
<div class="b" style="left:1px;top:292px;width:303px;height:17px;background:#ffe8ff"></div>
<svg style="left:4px;top:292px" width="16" height="16" viewBox="0 0 16 16"><rect x="0.7" y="0.7" width="14.6" height="14.6" fill="url(#winf)" stroke="url(#winb)" stroke-width="1.4"/><rect x="1" y="1" width="14" height="1.8" fill="url(#winb)"/><path d="M11.9 4.4C10.7 3.7 9.7 4.3 9.4 5.4L7.7 12.1C7.4 13.3 6.2 13.8 4.3 13.5M6.1 7.4H10.4" fill="none" stroke="#0e2050" stroke-width="1.25"/></svg>
<div class="t" style="left:26px;top:291.98px;font-size:14.5px;color:#000;font-weight:bold;font-family:'Liberation Sans', sans-serif;letter-spacing:.3px">sprintf</div>
<div class="b" style="left:1px;top:309px;width:303px;height:17px;background:#ffe8ff"></div>
<svg style="left:4px;top:309px" width="16" height="16" viewBox="0 0 16 16"><rect x="0.7" y="0.7" width="14.6" height="14.6" fill="url(#winf)" stroke="url(#winb)" stroke-width="1.4"/><rect x="1" y="1" width="14" height="1.8" fill="url(#winb)"/><path d="M11.9 4.4C10.7 3.7 9.7 4.3 9.4 5.4L7.7 12.1C7.4 13.3 6.2 13.8 4.3 13.5M6.1 7.4H10.4" fill="none" stroke="#0e2050" stroke-width="1.25"/></svg>
<div class="t" style="left:26px;top:308.98px;font-size:14.5px;color:#000;font-weight:bold;font-family:'Liberation Sans', sans-serif;letter-spacing:.3px">open</div>
<div class="b" style="left:1px;top:326px;width:303px;height:17px;background:#ffe8ff"></div>
<svg style="left:4px;top:326px" width="16" height="16" viewBox="0 0 16 16"><rect x="0.7" y="0.7" width="14.6" height="14.6" fill="url(#winf)" stroke="url(#winb)" stroke-width="1.4"/><rect x="1" y="1" width="14" height="1.8" fill="url(#winb)"/><path d="M11.9 4.4C10.7 3.7 9.7 4.3 9.4 5.4L7.7 12.1C7.4 13.3 6.2 13.8 4.3 13.5M6.1 7.4H10.4" fill="none" stroke="#0e2050" stroke-width="1.25"/></svg>
<div class="t" style="left:26px;top:325.98px;font-size:14.5px;color:#000;font-weight:bold;font-family:'Liberation Sans', sans-serif;letter-spacing:.3px">regfree</div>
<div class="b" style="left:1px;top:343px;width:303px;height:17px;background:#ffe8ff"></div>
<svg style="left:4px;top:343px" width="16" height="16" viewBox="0 0 16 16"><rect x="0.7" y="0.7" width="14.6" height="14.6" fill="url(#winf)" stroke="url(#winb)" stroke-width="1.4"/><rect x="1" y="1" width="14" height="1.8" fill="url(#winb)"/><path d="M11.9 4.4C10.7 3.7 9.7 4.3 9.4 5.4L7.7 12.1C7.4 13.3 6.2 13.8 4.3 13.5M6.1 7.4H10.4" fill="none" stroke="#0e2050" stroke-width="1.25"/></svg>
<div class="t" style="left:26px;top:342.98px;font-size:14.5px;color:#000;font-weight:bold;font-family:'Liberation Sans', sans-serif;letter-spacing:.3px">elf_nextscn</div>
<div class="b" style="left:1px;top:360px;width:303px;height:1px;background:#ffe8ff"></div>
<svg style="left:4px;top:360px" width="16" height="1" viewBox="0 0 16 1"><rect width="16" height="1" fill="#3a78e8"/></svg>
<div class="b" style="left:303px;top:137px;width:14px;height:224px;background:#e2e2e2;border-left:1px solid #bdbdbd"></div>
<div class="b" style="left:304px;top:137px;width:13px;height:13px;background:linear-gradient(90deg,#fdfdfd,#f2f2f2);border-bottom:1px solid #bdbdbd"></div>
<svg style="left:307px;top:142px" width="7" height="4" viewBox="0 0 7 4"><path d="M0 4h7L3.5 0z" fill="#505050"/></svg>
<div class="b" style="left:304px;top:348px;width:13px;height:13px;background:linear-gradient(90deg,#fdfdfd,#f2f2f2);border-top:1px solid #bdbdbd"></div>
<svg style="left:307px;top:353px" width="7" height="4" viewBox="0 0 7 4"><path d="M0 0h7L3.5 4z" fill="#505050"/></svg>
<div class="b" style="left:304px;top:304px;width:13px;height:28px;background:linear-gradient(90deg,#ffffff,#f0f0f0);border-top:1px solid #bdbdbd;border-bottom:1px solid #bdbdbd"></div>
<div class="b" style="left:1px;top:361px;width:302px;height:14px;background:#e2e2e2;border-top:1px solid #bdbdbd"></div>
<div class="b" style="left:1px;top:362px;width:14px;height:13px;background:linear-gradient(#fdfdfd,#f0f0f0);border-right:1px solid #bdbdbd"></div>
<svg style="left:6px;top:365px" width="4" height="7" viewBox="0 0 4 7"><path d="M4 0v7L0 3.5z" fill="#505050"/></svg>
<div class="b" style="left:15px;top:362px;width:75px;height:13px;background:linear-gradient(#ffffff,#efefef);border-right:1px solid #bdbdbd"></div>
<div class="b" style="left:289px;top:362px;width:14px;height:13px;background:linear-gradient(#fdfdfd,#f0f0f0);border-left:1px solid #bdbdbd"></div>
<svg style="left:295px;top:365px" width="4" height="7" viewBox="0 0 4 7"><path d="M0 0v7L4 3.5z" fill="#505050"/></svg>
<div class="b" style="left:303px;top:361px;width:14px;height:14px;background:#efefef;border-top:1px solid #bdbdbd;border-left:1px solid #bdbdbd"></div>
<div class="t" style="left:6px;top:378.15px;font-size:14px;color:#000;font-weight:normal;font-family:'Liberation Sans', sans-serif;">Line 645 of 719</div>
<div class="b" style="left:0px;top:400px;width:318px;height:30px;background:#efefef;border:1px solid #c4c4c4"></div>
<svg style="left:3px;top:406px" width="16" height="16" viewBox="0 0 16 16"><path d="M0.9 1.1Q4.8 3.6 8.4 5.2Q12 3.6 16 1.1Q11.8 8.8 8.4 14.8Q5 8.8 0.9 1.1Z" fill="#000"/><circle cx="6.8" cy="7.6" r="0.85" fill="#b01010"/><circle cx="10.1" cy="7.6" r="0.85" fill="#b01010"/></svg>
<div class="t" style="left:26px;top:406.15px;font-size:14px;color:#000;font-weight:normal;font-family:'Liberation Sans', sans-serif;">VulFi Results</div>
<svg style="left:247px;top:410px" width="10" height="11" viewBox="0 0 10 11"><rect x="0.5" y="0.5" width="9" height="10" fill="none" stroke="#5a5a5a"/><rect x="0" y="0" width="10" height="2" fill="#5a5a5a"/></svg><svg style="left:272px;top:410px" width="11" height="11" viewBox="0 0 11 11"><rect x="0.5" y="0.5" width="10" height="10" rx="2.5" fill="none" stroke="#6a6a6a"/><rect x="4.5" y="2.5" width="4" height="4" fill="none" stroke="#6a6a6a"/><rect x="2.5" y="4.5" width="4" height="4" fill="#efefef" stroke="#6a6a6a"/></svg><svg style="left:298px;top:410px" width="11" height="11" viewBox="0 0 11 11"><rect x="0.5" y="0.5" width="10" height="10" rx="2.5" fill="none" stroke="#6a6a6a"/><path d="M3 3L8 8M8 3L3 8" stroke="#555" stroke-width="2"/></svg>
<div class="b" style="left:0px;top:433px;width:318px;height:238px;background:#fff;border:1px solid #c4c4c4"></div>
<div class="b" style="left:1px;top:434px;width:303px;height:18px;background:linear-gradient(#fbfbfb,#ececec);border-bottom:1px solid #bdbdbd"></div>
<div class="b" style="left:133px;top:434px;width:1px;height:17px;background:#d0d0d0"></div>
<div class="b" style="left:241px;top:434px;width:1px;height:17px;background:#d0d0d0"></div>
<div class="t" style="left:3px;top:434.15px;font-size:14px;color:#000;font-weight:normal;font-family:'Liberation Sans', sans-serif;">IssueName</div>
<div class="t" style="left:136px;top:434.15px;font-size:14px;color:#000;font-weight:normal;font-family:'Liberation Sans', sans-serif;">FunctionName</div>
<div class="t" style="left:244px;top:434.15px;font-size:14px;color:#000;font-weight:normal;font-family:'Liberation Sans', sans-serif;">FoundIn</div>
<div class="b" style="left:1px;top:452px;width:303px;height:204px;overflow:hidden">
<svg style="left:3px;top:0px" width="16" height="16" viewBox="0 0 16 16"><path d="M0.9 1.1Q4.8 3.6 8.4 5.2Q12 3.6 16 1.1Q11.8 8.8 8.4 14.8Q5 8.8 0.9 1.1Z" fill="#000"/><circle cx="6.8" cy="7.6" r="0.85" fill="#b01010"/><circle cx="10.1" cy="7.6" r="0.85" fill="#b01010"/></svg>
<div class="t" style="left:25.5px;top:0px;color:#000">Buffer Overflow</div>
<div class="t" style="left:137px;top:0px;color:#000">.strcat</div>
<div class="t" style="left:244.5px;top:0px;color:#000">dwarf_srcfiles</div>
<svg style="left:3px;top:17px" width="16" height="16" viewBox="0 0 16 16"><path d="M0.9 1.1Q4.8 3.6 8.4 5.2Q12 3.6 16 1.1Q11.8 8.8 8.4 14.8Q5 8.8 0.9 1.1Z" fill="#000"/><circle cx="6.8" cy="7.6" r="0.85" fill="#b01010"/><circle cx="10.1" cy="7.6" r="0.85" fill="#b01010"/></svg>
<div class="t" style="left:25.5px;top:17px;color:#000">Buffer Overflow</div>
<div class="t" style="left:137px;top:17px;color:#000">.strcat</div>
<div class="t" style="left:244.5px;top:17px;color:#000">dwarf_linesrc</div>
<svg style="left:3px;top:34px" width="16" height="16" viewBox="0 0 16 16"><path d="M0.9 1.1Q4.8 3.6 8.4 5.2Q12 3.6 16 1.1Q11.8 8.8 8.4 14.8Q5 8.8 0.9 1.1Z" fill="#000"/><circle cx="6.8" cy="7.6" r="0.85" fill="#b01010"/><circle cx="10.1" cy="7.6" r="0.85" fill="#b01010"/></svg>
<div class="t" style="left:25.5px;top:34px;color:#000">Buffer Overflow</div>
<div class="t" style="left:137px;top:34px;color:#000">.strcat</div>
<div class="t" style="left:244.5px;top:34px;color:#000">dwarf_lineno</div>
<svg style="left:3px;top:51px" width="16" height="16" viewBox="0 0 16 16"><path d="M0.9 1.1Q4.8 3.6 8.4 5.2Q12 3.6 16 1.1Q11.8 8.8 8.4 14.8Q5 8.8 0.9 1.1Z" fill="#000"/><circle cx="6.8" cy="7.6" r="0.85" fill="#b01010"/><circle cx="10.1" cy="7.6" r="0.85" fill="#b01010"/></svg>
<div class="t" style="left:25.5px;top:51px;color:#000">Buffer Overflow</div>
<div class="t" style="left:137px;top:51px;color:#000">.strcat</div>
<div class="t" style="left:244.5px;top:51px;color:#000">dwarf_lineaddr</div>
<svg style="left:3px;top:68px" width="16" height="16" viewBox="0 0 16 16"><path d="M0.9 1.1Q4.8 3.6 8.4 5.2Q12 3.6 16 1.1Q11.8 8.8 8.4 14.8Q5 8.8 0.9 1.1Z" fill="#000"/><circle cx="6.8" cy="7.6" r="0.85" fill="#b01010"/><circle cx="10.1" cy="7.6" r="0.85" fill="#b01010"/></svg>
<div class="t" style="left:25.5px;top:68px;color:#000">Buffer Overflow</div>
<div class="t" style="left:137px;top:68px;color:#000">.strncpy</div>
<div class="t" style="left:244.5px;top:68px;color:#000">build_string</div>
<div class="b" style="left:0;top:85px;width:303px;height:17px;background:#308cc6"></div>
<svg style="left:3px;top:85px" width="16" height="16" viewBox="0 0 16 16"><path d="M0.9 1.1Q4.8 3.6 8.4 5.2Q12 3.6 16 1.1Q11.8 8.8 8.4 14.8Q5 8.8 0.9 1.1Z" fill="#000"/><circle cx="6.8" cy="7.6" r="0.85" fill="#b01010"/><circle cx="10.1" cy="7.6" r="0.85" fill="#b01010"/></svg>
<div class="t" style="left:25.5px;top:85px;color:#fff">Buffer Overflow</div>
<div class="t" style="left:137px;top:85px;color:#fff">.strncpy</div>
<div class="t" style="left:244.5px;top:85px;color:#fff">esb_appendn</div>
<svg style="left:3px;top:102px" width="16" height="16" viewBox="0 0 16 16"><path d="M0.9 1.1Q4.8 3.6 8.4 5.2Q12 3.6 16 1.1Q11.8 8.8 8.4 14.8Q5 8.8 0.9 1.1Z" fill="#000"/><circle cx="6.8" cy="7.6" r="0.85" fill="#b01010"/><circle cx="10.1" cy="7.6" r="0.85" fill="#b01010"/></svg>
<div class="t" style="left:25.5px;top:102px;color:#000">Buffer Overflow</div>
<div class="t" style="left:137px;top:102px;color:#000">.strncpy</div>
<div class="t" style="left:244.5px;top:102px;color:#000">safe_strcpy</div>
<svg style="left:3px;top:119px" width="16" height="16" viewBox="0 0 16 16"><path d="M0.9 1.1Q4.8 3.6 8.4 5.2Q12 3.6 16 1.1Q11.8 8.8 8.4 14.8Q5 8.8 0.9 1.1Z" fill="#000"/><circle cx="6.8" cy="7.6" r="0.85" fill="#b01010"/><circle cx="10.1" cy="7.6" r="0.85" fill="#b01010"/></svg>
<div class="t" style="left:25.5px;top:119px;color:#000">Buffer Overflow</div>
<div class="t" style="left:137px;top:119px;color:#000">.strncpy</div>
<div class="t" style="left:244.5px;top:119px;color:#000">safe_strncpy</div>
<svg style="left:3px;top:136px" width="16" height="16" viewBox="0 0 16 16"><path d="M0.9 1.1Q4.8 3.6 8.4 5.2Q12 3.6 16 1.1Q11.8 8.8 8.4 14.8Q5 8.8 0.9 1.1Z" fill="#000"/><circle cx="6.8" cy="7.6" r="0.85" fill="#b01010"/><circle cx="10.1" cy="7.6" r="0.85" fill="#b01010"/></svg>
<div class="t" style="left:25.5px;top:136px;color:#000">Buffer Overflow</div>
<div class="t" style="left:137px;top:136px;color:#000">.memcpy</div>
<div class="t" style="left:244.5px;top:136px;color:#000">print_frame</div>
<svg style="left:3px;top:153px" width="16" height="16" viewBox="0 0 16 16"><path d="M0.9 1.1Q4.8 3.6 8.4 5.2Q12 3.6 16 1.1Q11.8 8.8 8.4 14.8Q5 8.8 0.9 1.1Z" fill="#000"/><circle cx="6.8" cy="7.6" r="0.85" fill="#b01010"/><circle cx="10.1" cy="7.6" r="0.85" fill="#b01010"/></svg>
<div class="t" style="left:25.5px;top:153px;color:#000">Buffer Overflow</div>
<div class="t" style="left:137px;top:153px;color:#000">.memcpy</div>
<div class="t" style="left:244.5px;top:153px;color:#000">print_frame</div>
<svg style="left:3px;top:170px" width="16" height="16" viewBox="0 0 16 16"><path d="M0.9 1.1Q4.8 3.6 8.4 5.2Q12 3.6 16 1.1Q11.8 8.8 8.4 14.8Q5 8.8 0.9 1.1Z" fill="#000"/><circle cx="6.8" cy="7.6" r="0.85" fill="#b01010"/><circle cx="10.1" cy="7.6" r="0.85" fill="#b01010"/></svg>
<div class="t" style="left:25.5px;top:170px;color:#000">Buffer Overflow</div>
<div class="t" style="left:137px;top:170px;color:#000">.memcpy</div>
<div class="t" style="left:244.5px;top:170px;color:#000">print_frame</div>
<svg style="left:3px;top:187px" width="16" height="16" viewBox="0 0 16 16"><path d="M0.9 1.1Q4.8 3.6 8.4 5.2Q12 3.6 16 1.1Q11.8 8.8 8.4 14.8Q5 8.8 0.9 1.1Z" fill="#000"/><circle cx="6.8" cy="7.6" r="0.85" fill="#b01010"/><circle cx="10.1" cy="7.6" r="0.85" fill="#b01010"/></svg>
<div class="t" style="left:25.5px;top:187px;color:#000">Buffer Overflow</div>
<div class="t" style="left:137px;top:187px;color:#000">.memcpy</div>
<div class="t" style="left:244.5px;top:187px;color:#000">_dwarf_memcpy</div>
</div>
<div class="b" style="left:303px;top:434px;width:14px;height:222px;background:#e2e2e2;border-left:1px solid #bdbdbd"></div>
<div class="b" style="left:304px;top:434px;width:13px;height:13px;background:linear-gradient(90deg,#fdfdfd,#f2f2f2);border-bottom:1px solid #bdbdbd"></div>
<svg style="left:307px;top:439px" width="7" height="4" viewBox="0 0 7 4"><path d="M0 4h7L3.5 0z" fill="#505050"/></svg>
<div class="b" style="left:304px;top:643px;width:13px;height:13px;background:linear-gradient(90deg,#fdfdfd,#f2f2f2);border-top:1px solid #bdbdbd"></div>
<svg style="left:307px;top:648px" width="7" height="4" viewBox="0 0 7 4"><path d="M0 0h7L3.5 4z" fill="#505050"/></svg>
<div class="b" style="left:304px;top:455px;width:13px;height:28px;background:linear-gradient(90deg,#ffffff,#f0f0f0);border-top:1px solid #bdbdbd;border-bottom:1px solid #bdbdbd"></div>
<div class="b" style="left:304px;top:446px;width:13px;height:9px;background:#d8d8d8"></div>
<div class="b" style="left:1px;top:656px;width:302px;height:14px;background:#e2e2e2;border-top:1px solid #bdbdbd"></div>
<div class="b" style="left:1px;top:657px;width:14px;height:13px;background:linear-gradient(#fdfdfd,#f0f0f0);border-right:1px solid #bdbdbd"></div>
<svg style="left:6px;top:660px" width="4" height="7" viewBox="0 0 4 7"><path d="M4 0v7L0 3.5z" fill="#505050"/></svg>
<div class="b" style="left:15px;top:657px;width:77px;height:13px;background:linear-gradient(#ffffff,#efefef);border-right:1px solid #bdbdbd"></div>
<div class="b" style="left:289px;top:657px;width:14px;height:13px;background:linear-gradient(#fdfdfd,#f0f0f0);border-left:1px solid #bdbdbd"></div>
<svg style="left:295px;top:660px" width="4" height="7" viewBox="0 0 4 7"><path d="M0 0v7L4 3.5z" fill="#505050"/></svg>
<div class="b" style="left:303px;top:656px;width:14px;height:14px;background:#efefef;border-top:1px solid #bdbdbd;border-left:1px solid #bdbdbd"></div>
<div class="t" style="left:6px;top:673.15px;font-size:14px;color:#000;font-weight:normal;font-family:'Liberation Sans', sans-serif;">Line 16 of 205</div>
<div class="b" style="left:322px;top:134px;width:858px;height:1px;background:#c4c4c4"></div>
<div class="b" style="left:451px;top:106px;width:152px;height:29px;background:linear-gradient(#e4e4e4,#d8d8d8);border:1px solid #c0c0c0;border-bottom:none;border-radius:3px 3px 0 0"></div>
<svg style="left:463px;top:112px" width="16" height="16" viewBox="0 0 16 16"><rect x="0.7" y="0.7" width="12.6" height="12.6" fill="url(#winf)" stroke="url(#winb)" stroke-width="1.4"/><rect x="1" y="1" width="12" height="1.8" fill="url(#winb)"/><rect x="5.6" y="3.6" width="10" height="12" fill="url(#docf)" stroke="#1a4a90" stroke-width="1.2"/><path d="M7 5.6h3.5M9 7.6h4.5M9 9.6h4.5M7 11.6h3.5M9 13.6h4.5" stroke="#3a4048" stroke-width="1.1"/></svg>
<div class="t" style="left:487px;top:113.15px;font-size:14px;color:#000;font-weight:normal;font-family:'Liberation Sans', sans-serif;">Pseudoco...</div>
<svg style="left:573px;top:115px" width="12" height="11" viewBox="0 0 12 11"><rect x="0" y="0" width="12" height="11" fill="url(#cls)"/><path d="M3.3 2.9L8.8 8.2M8.8 2.9L3.3 8.2" stroke="#fff" stroke-width="1.8" stroke-linecap="round"/></svg>
<div class="b" style="left:602px;top:106px;width:132px;height:29px;background:linear-gradient(#e4e4e4,#d8d8d8);border:1px solid #c0c0c0;border-bottom:none;border-radius:3px 3px 0 0"></div>
<svg style="left:614px;top:112px" width="16" height="16" viewBox="0 0 16 16"><rect x="0.7" y="0.7" width="13.6" height="13.6" fill="#fff" stroke="url(#winb)" stroke-width="1.4"/><rect x="1" y="1" width="13" height="1.8" fill="url(#winb)"/><path d="M7.5 4.2L11.8 6.3V10.4L7.5 12.5L3.2 10.4V6.3Z" fill="#e4eefc" stroke="#2020f0" stroke-width="1.3"/></svg>
<div class="t" style="left:634px;top:113.15px;font-size:14px;color:#000;font-weight:normal;font-family:'Liberation Sans', sans-serif;">Hex Vie...</div>
<svg style="left:704px;top:115px" width="12" height="11" viewBox="0 0 12 11"><rect x="0" y="0" width="12" height="11" fill="url(#cls)"/><path d="M3.3 2.9L8.8 8.2M8.8 2.9L3.3 8.2" stroke="#fff" stroke-width="1.8" stroke-linecap="round"/></svg>
<div class="b" style="left:733px;top:106px;width:128px;height:29px;background:linear-gradient(#e4e4e4,#d8d8d8);border:1px solid #c0c0c0;border-bottom:none;border-radius:3px 3px 0 0"></div>
<svg style="left:745px;top:112px" width="16" height="16" viewBox="0 0 16 16"><rect x="0.7" y="0.7" width="13.6" height="13.6" fill="url(#winf)" stroke="url(#winb)" stroke-width="1.4"/><rect x="1" y="1" width="13" height="1.8" fill="url(#winb)"/><rect x="6.2" y="4.3" width="3.2" height="2.4" fill="none" stroke="#0a2a60" stroke-width="1.2"/><path d="M6.5 6.5L4.3 13.5M9 6.5L10.5 13.5M5.4 10.8L8.6 8.8" fill="none" stroke="#0a2a60" stroke-width="1.3"/></svg>
<div class="t" style="left:768px;top:113.15px;font-size:14px;color:#000;font-weight:normal;font-family:'Liberation Sans', sans-serif;">Struct...</div>
<svg style="left:831px;top:115px" width="12" height="11" viewBox="0 0 12 11"><rect x="0" y="0" width="12" height="11" fill="url(#cls)"/><path d="M3.3 2.9L8.8 8.2M8.8 2.9L3.3 8.2" stroke="#fff" stroke-width="1.8" stroke-linecap="round"/></svg>
<div class="b" style="left:860px;top:106px;width:105px;height:29px;background:linear-gradient(#e4e4e4,#d8d8d8);border:1px solid #c0c0c0;border-bottom:none;border-radius:3px 3px 0 0"></div>
<svg style="left:872px;top:112px" width="16" height="16" viewBox="0 0 16 16"><rect x="0.7" y="0.7" width="14.6" height="13.6" fill="url(#winf)" stroke="url(#winb)" stroke-width="1.4"/><rect x="1" y="1" width="14" height="1.8" fill="url(#winb)"/><path d="M5.5 2.5L7.5 4.5L5.5 6.5L3.5 4.5Z" fill="#20e8ff" stroke="#0a2a80" stroke-width="1"/><path d="M8.5 4.5h3" stroke="#1a50c0" stroke-width="1.4"/><path d="M5.5 6.5L7.5 8.5L5.5 10.5L3.5 8.5Z" fill="#20e8ff" stroke="#0a2a80" stroke-width="1"/><path d="M8.5 8.5h3" stroke="#1a50c0" stroke-width="1.4"/><path d="M5.5 10.5L7.5 12.5L5.5 14.5L3.5 12.5Z" fill="#20e8ff" stroke="#0a2a80" stroke-width="1"/><path d="M8.5 12.5h3" stroke="#1a50c0" stroke-width="1.4"/></svg>
<div class="t" style="left:895px;top:113.15px;font-size:14px;color:#000;font-weight:normal;font-family:'Liberation Sans', sans-serif;">En...</div>
<svg style="left:936px;top:115px" width="12" height="11" viewBox="0 0 12 11"><rect x="0" y="0" width="12" height="11" fill="url(#cls)"/><path d="M3.3 2.9L8.8 8.2M8.8 2.9L3.3 8.2" stroke="#fff" stroke-width="1.8" stroke-linecap="round"/></svg>
<div class="b" style="left:964px;top:106px;width:109px;height:29px;background:linear-gradient(#e4e4e4,#d8d8d8);border:1px solid #c0c0c0;border-bottom:none;border-radius:3px 3px 0 0"></div>
<svg style="left:976px;top:112px" width="16" height="16" viewBox="0 0 16 16"><rect x="0.7" y="0.7" width="13.6" height="13.6" fill="url(#winf)" stroke="url(#winb)" stroke-width="1.4"/><rect x="1" y="1" width="13" height="1.8" fill="url(#winb)"/><rect x="6.6" y="5.6" width="9" height="10" fill="url(#docf)" stroke="#1a4a90" stroke-width="1.2"/><path d="M9 7.5h4M9 9.5h4M9 11.5h4M9 13.5h4" stroke="#1010a0" stroke-width="1.1"/><path d="M1.3 5C2.5 7.5 4 8 6 8" fill="none" stroke="#20c020" stroke-width="2"/><path d="M5.6 5.3L8.4 8L5.6 10.7Z" fill="#20d020" stroke="#0a5010" stroke-width=".8"/></svg>
<div class="t" style="left:996px;top:113.15px;font-size:14px;color:#000;font-weight:normal;font-family:'Liberation Sans', sans-serif;">Imp...</div>
<svg style="left:1043px;top:115px" width="12" height="11" viewBox="0 0 12 11"><rect x="0" y="0" width="12" height="11" fill="url(#cls)"/><path d="M3.3 2.9L8.8 8.2M8.8 2.9L3.3 8.2" stroke="#fff" stroke-width="1.8" stroke-linecap="round"/></svg>
<div class="b" style="left:1072px;top:106px;width:108px;height:29px;background:linear-gradient(#e4e4e4,#d8d8d8);border:1px solid #c0c0c0;border-bottom:none;border-radius:3px 3px 0 0"></div>
<svg style="left:1084px;top:112px" width="16" height="16" viewBox="0 0 16 16"><rect x="1.7" y="0.7" width="13.6" height="13.6" fill="url(#winf)" stroke="url(#winb)" stroke-width="1.4"/><rect x="2" y="1" width="13" height="1.8" fill="url(#winb)"/><rect x="0.6" y="5.6" width="9.5" height="10" fill="url(#docf)" stroke="#1a4a90" stroke-width="1.2"/><path d="M3 7.5h4M3 9.5h4M3 11.5h4M3 13.5h4" stroke="#1010a0" stroke-width="1.1"/><path d="M7.8 10.5C8.5 9 9.5 8.3 11.2 8.3" fill="none" stroke="#20c020" stroke-width="2"/><path d="M11 5.5L14 8.3L11 11.1Z" fill="#20d020" stroke="#0a5010" stroke-width=".8"/></svg>
<div class="t" style="left:1106px;top:113.15px;font-size:14px;color:#000;font-weight:normal;font-family:'Liberation Sans', sans-serif;">Exp...</div>
<svg style="left:1151px;top:115px" width="12" height="11" viewBox="0 0 12 11"><rect x="0" y="0" width="12" height="11" fill="url(#cls)"/><path d="M3.3 2.9L8.8 8.2M8.8 2.9L3.3 8.2" stroke="#fff" stroke-width="1.8" stroke-linecap="round"/></svg>
<div class="b" style="left:322px;top:104px;width:130px;height:32px;background:linear-gradient(#f8f8f8,#efefef);border:1px solid #bcbcbc;border-bottom:none;border-radius:4px 4px 0 0"></div>
<svg style="left:334px;top:111px" width="16" height="16" viewBox="0 0 16 16"><rect x="0.7" y="0.7" width="12.6" height="12.6" fill="url(#winf)" stroke="url(#winb)" stroke-width="1.4"/><rect x="1" y="1" width="12" height="1.8" fill="url(#winb)"/><rect x="5.6" y="3.6" width="10" height="12" fill="url(#docf)" stroke="#1a4a90" stroke-width="1.2"/><path d="M7 5.6h3.5M9 7.6h4.5M9 9.6h4.5M7 11.6h3.5M9 13.6h4.5" stroke="#3a4048" stroke-width="1.1"/></svg>
<div class="t" style="left:355px;top:112.15px;font-size:14px;color:#000;font-weight:normal;font-family:'Liberation Sans', sans-serif;">IDA Vie...</div>
<svg style="left:422px;top:114px" width="12" height="11" viewBox="0 0 12 11"><rect x="0" y="0" width="12" height="11" fill="url(#cls)"/><path d="M3.3 2.9L8.8 8.2M8.8 2.9L3.3 8.2" stroke="#fff" stroke-width="1.8" stroke-linecap="round"/></svg>
<div class="b" style="left:322px;top:135px;width:858px;height:556px;background:#efefef"></div>
<div class="b" style="left:322px;top:136px;width:75px;height:555px;background:#fff"></div>
<svg style="left:386px;top:135.7px" width="6" height="6" viewBox="0 0 6 6"><circle cx="3" cy="3" r="3" fill="#5ac8fa"/></svg>
<svg style="left:386px;top:148.7px" width="6" height="6" viewBox="0 0 6 6"><circle cx="3" cy="3" r="3" fill="#5ac8fa"/></svg>
<svg style="left:386px;top:161.7px" width="6" height="6" viewBox="0 0 6 6"><circle cx="3" cy="3" r="3" fill="#5ac8fa"/></svg>
<svg style="left:386px;top:174.7px" width="6" height="6" viewBox="0 0 6 6"><circle cx="3" cy="3" r="3" fill="#5ac8fa"/></svg>
<svg style="left:386px;top:187.7px" width="6" height="6" viewBox="0 0 6 6"><circle cx="3" cy="3" r="3" fill="#5ac8fa"/></svg>
<svg style="left:386px;top:200.7px" width="6" height="6" viewBox="0 0 6 6"><circle cx="3" cy="3" r="3" fill="#5ac8fa"/></svg>
<svg style="left:386px;top:213.7px" width="6" height="6" viewBox="0 0 6 6"><circle cx="3" cy="3" r="3" fill="#5ac8fa"/></svg>
<svg style="left:386px;top:226.7px" width="6" height="6" viewBox="0 0 6 6"><circle cx="3" cy="3" r="3" fill="#5ac8fa"/></svg>
<svg style="left:386px;top:239.7px" width="6" height="6" viewBox="0 0 6 6"><circle cx="3" cy="3" r="3" fill="#5ac8fa"/></svg>
<svg style="left:386px;top:252.7px" width="6" height="6" viewBox="0 0 6 6"><circle cx="3" cy="3" r="3" fill="#5ac8fa"/></svg>
<svg style="left:386px;top:291.7px" width="6" height="6" viewBox="0 0 6 6"><circle cx="3" cy="3" r="3" fill="#5ac8fa"/></svg>
<svg style="left:386px;top:304.7px" width="6" height="6" viewBox="0 0 6 6"><circle cx="3" cy="3" r="3" fill="#5ac8fa"/></svg>
<svg style="left:386px;top:317.7px" width="6" height="6" viewBox="0 0 6 6"><circle cx="3" cy="3" r="3" fill="#5ac8fa"/></svg>
<svg style="left:386px;top:330.7px" width="6" height="6" viewBox="0 0 6 6"><circle cx="3" cy="3" r="3" fill="#5ac8fa"/></svg>
<svg style="left:386px;top:343.7px" width="6" height="6" viewBox="0 0 6 6"><circle cx="3" cy="3" r="3" fill="#5ac8fa"/></svg>
<svg style="left:386px;top:356.7px" width="6" height="6" viewBox="0 0 6 6"><circle cx="3" cy="3" r="3" fill="#5ac8fa"/></svg>
<svg style="left:386px;top:369.7px" width="6" height="6" viewBox="0 0 6 6"><circle cx="3" cy="3" r="3" fill="#5ac8fa"/></svg>
<svg style="left:386px;top:382.7px" width="6" height="6" viewBox="0 0 6 6"><circle cx="3" cy="3" r="3" fill="#5ac8fa"/></svg>
<svg style="left:386px;top:395.7px" width="6" height="6" viewBox="0 0 6 6"><circle cx="3" cy="3" r="3" fill="#5ac8fa"/></svg>
<svg style="left:386px;top:408.7px" width="6" height="6" viewBox="0 0 6 6"><circle cx="3" cy="3" r="3" fill="#5ac8fa"/></svg>
<svg style="left:386px;top:421.7px" width="6" height="6" viewBox="0 0 6 6"><circle cx="3" cy="3" r="3" fill="#5ac8fa"/></svg>
<svg style="left:386px;top:434.7px" width="6" height="6" viewBox="0 0 6 6"><circle cx="3" cy="3" r="3" fill="#5ac8fa"/></svg>
<svg style="left:386px;top:447.7px" width="6" height="6" viewBox="0 0 6 6"><circle cx="3" cy="3" r="3" fill="#5ac8fa"/></svg>
<svg style="left:386px;top:460.7px" width="6" height="6" viewBox="0 0 6 6"><circle cx="3" cy="3" r="3" fill="#5ac8fa"/></svg>
<svg style="left:386px;top:473.7px" width="6" height="6" viewBox="0 0 6 6"><circle cx="3" cy="3" r="3" fill="#5ac8fa"/></svg>
<svg style="left:386px;top:486.7px" width="6" height="6" viewBox="0 0 6 6"><circle cx="3" cy="3" r="3" fill="#5ac8fa"/></svg>
<svg style="left:386px;top:499.7px" width="6" height="6" viewBox="0 0 6 6"><circle cx="3" cy="3" r="3" fill="#5ac8fa"/></svg>
<svg style="left:386px;top:512.7px" width="6" height="6" viewBox="0 0 6 6"><circle cx="3" cy="3" r="3" fill="#5ac8fa"/></svg>
<svg style="left:386px;top:525.7px" width="6" height="6" viewBox="0 0 6 6"><circle cx="3" cy="3" r="3" fill="#5ac8fa"/></svg>
<svg style="left:386px;top:538.7px" width="6" height="6" viewBox="0 0 6 6"><circle cx="3" cy="3" r="3" fill="#5ac8fa"/></svg>
<svg style="left:386px;top:551.7px" width="6" height="6" viewBox="0 0 6 6"><circle cx="3" cy="3" r="3" fill="#5ac8fa"/></svg>
<svg style="left:386px;top:564.7px" width="6" height="6" viewBox="0 0 6 6"><circle cx="3" cy="3" r="3" fill="#5ac8fa"/></svg>
<svg style="left:386px;top:577.7px" width="6" height="6" viewBox="0 0 6 6"><circle cx="3" cy="3" r="3" fill="#5ac8fa"/></svg>
<svg style="left:386px;top:590.7px" width="6" height="6" viewBox="0 0 6 6"><circle cx="3" cy="3" r="3" fill="#5ac8fa"/></svg>
<svg style="left:386px;top:603.7px" width="6" height="6" viewBox="0 0 6 6"><circle cx="3" cy="3" r="3" fill="#5ac8fa"/></svg>
<svg style="left:374px;top:196px" width="18" height="104" viewBox="0 0 18 104"><path d="M1.5 101V1.5H14" fill="none" stroke="#a8a8a8" stroke-dasharray="4 3"/><path d="M1.5 99.5H6" stroke="#a8a8a8"/><path d="M5 95.5L10 99.5L5 103.5z" fill="#a8a8a8"/></svg>
<div class="b" style="left:401px;top:136px;width:779px;height:555px;background:#efefef;border:1px solid #b8b8b8;border-right:none"></div>
<div class="b" style="left:402px;top:137px;width:763px;height:520px;overflow:hidden;background:#fff">
<div class="b" style="left:336px;top:78px;width:24px;height:13px;background:#ff9cff"></div>
<div class="b" style="left:336px;top:104px;width:24px;height:13px;background:#ff9cff"></div>
<div class="b" style="left:336px;top:234px;width:24px;height:13px;background:#ff9cff"></div>
<div class="b" style="left:408px;top:247px;width:72px;height:13px;background:#ffff00"></div>
<div class="b" style="left:336px;top:260px;width:24px;height:13px;background:#ff9cff"></div>
<div class="b" style="left:0;top:273px;width:763px;height:13px;background:#e0e0e0"></div>
<div class="b" style="left:0;top:273px;width:16px;height:1px;background:#c4c4c4"></div>
<div class="b" style="left:336px;top:273px;width:24px;height:13px;background:#dc9cdc"></div>
<div class="b" style="left:328px;top:286px;width:64px;height:13px;background:#ffc490"></div>
<div class="ln" style="left:16px;top:0px"><span class="ad">.text:080500DE                 </span><span class="mn">mov     </span><span class="op">eax, ecx</span></div>
<div class="ln" style="left:16px;top:13px"><span class="ad">.text:080500E0                 </span><span class="mn">mov     </span><span class="op">[ebp+</span><span class="gv">remaining</span><span class="op">], eax</span></div>
<div class="ln" style="left:16px;top:26px"><span class="ad">.text:080500E3                 </span><span class="mn">mov     </span><span class="op">eax, [ebp+</span><span class="gv">remaining</span><span class="op">]</span></div>
<div class="ln" style="left:16px;top:39px"><span class="ad">.text:080500E6                 </span><span class="mn">cmp     </span><span class="op">eax, [ebp+</span><span class="gv">needed</span><span class="op">]</span></div>
<div class="ln" style="left:16px;top:52px"><span class="ad">.text:080500E9                 </span><span class="mn">jnb     </span><span class="op">short loc_80500FD</span></div>
<div class="ln" style="left:16px;top:65px"><span class="ad">.text:080500EB                 </span><span class="mn">mov     </span><span class="op">eax, [ebp+</span><span class="gv">needed</span><span class="op">]</span></div>
<div class="ln" style="left:16px;top:78px"><span class="ad">.text:080500EE                 </span><span class="mn">mov     </span><span class="op">[</span><span class="hl">esp</span><span class="op">+</span><span class="gv">4</span><span class="op">], eax</span>    <span class="cm">; len</span></div>
<div class="ln" style="left:16px;top:91px"><span class="ad">.text:080500F2                 </span><span class="mn">mov     </span><span class="op">eax, [ebp+</span><span class="gv">data</span><span class="op">]</span></div>
<div class="ln" style="left:16px;top:104px"><span class="ad">.text:080500F5                 </span><span class="mn">mov     </span><span class="op">[</span><span class="hl">esp</span><span class="op">], eax</span>      <span class="cm">; data</span></div>
<div class="ln" style="left:16px;top:117px"><span class="ad">.text:080500F8                 </span><span class="mn">call    </span><span class="op">allocate_more</span></div>
<div class="ln" style="left:16px;top:130px"><span class="ad">.text:080500FD</span></div>
<div class="ln" style="left:16px;top:143px"><span class="ad">.text:080500FD </span><span class="op">loc_80500FD:</span>                            <span class="xr">; CODE XREF: esb_appendn_internal+5E↑j</span></div>
<div class="ln" style="left:16px;top:156px"><span class="ad">.text:080500FD                 </span><span class="mn">mov     </span><span class="op">eax, [ebp+</span><span class="gv">data</span><span class="op">]</span></div>
<div class="ln" style="left:16px;top:169px"><span class="ad">.text:08050100                 </span><span class="mn">mov     </span><span class="op">edx, [eax]</span></div>
<div class="ln" style="left:16px;top:182px"><span class="ad">.text:08050102                 </span><span class="mn">mov     </span><span class="op">eax, [ebp+</span><span class="gv">data</span><span class="op">]</span></div>
<div class="ln" style="left:16px;top:195px"><span class="ad">.text:08050105                 </span><span class="mn">mov     </span><span class="op">eax, [eax+</span><span class="gv">8</span><span class="op">]</span></div>
<div class="ln" style="left:16px;top:208px"><span class="ad">.text:08050108                 </span><span class="mn">add     </span><span class="op">edx, eax</span></div>
<div class="ln" style="left:16px;top:221px"><span class="ad">.text:0805010A                 </span><span class="mn">mov     </span><span class="op">eax, [ebp+</span><span class="gv">len</span><span class="op">]</span></div>
<div class="ln" style="left:16px;top:234px"><span class="ad">.text:0805010D                 </span><span class="mn">mov     </span><span class="op">[</span><span class="hl">esp</span><span class="op">+</span><span class="gv">8</span><span class="op">], eax</span>    <span class="cm">; n</span></div>
<div class="ln" style="left:16px;top:247px"><span class="ad">.text:08050111                 </span><span class="mn">mov     </span><span class="op">eax, [ebp+</span><span class="yl">in_string</span><span class="op">]</span></div>
<div class="ln" style="left:16px;top:260px"><span class="ad">.text:08050114                 </span><span class="mn">mov     </span><span class="op">[</span><span class="hl">esp</span><span class="op">+</span><span class="gv">4</span><span class="op">], eax</span>    <span class="cm">; src</span></div>
<div class="ln" style="left:16px;top:273px"><span class="ad cur">.text:08050118                 </span><span class="mn">mov     </span><span class="op">[</span><span class="hl2">esp</span><span class="op">], edx</span>      <span class="cm">; dest</span></div>
<div class="ln" style="left:16px;top:286px"><span class="ad">.text:0805011B                 </span><span class="mn">call    </span><span class="or">_strncpy</span></div>
<div class="ln" style="left:16px;top:299px"><span class="ad">.text:08050120                 </span><span class="mn">mov     </span><span class="op">eax, [ebp+</span><span class="gv">data</span><span class="op">]</span></div>
<div class="ln" style="left:16px;top:312px"><span class="ad">.text:08050123                 </span><span class="mn">mov     </span><span class="op">eax, [eax+</span><span class="gv">8</span><span class="op">]</span></div>
<div class="ln" style="left:16px;top:325px"><span class="ad">.text:08050126                 </span><span class="mn">mov     </span><span class="op">edx, eax</span></div>
<div class="ln" style="left:16px;top:338px"><span class="ad">.text:08050128                 </span><span class="mn">add     </span><span class="op">edx, [ebp+</span><span class="gv">len</span><span class="op">]</span></div>
<div class="ln" style="left:16px;top:351px"><span class="ad">.text:0805012B                 </span><span class="mn">mov     </span><span class="op">eax, [ebp+</span><span class="gv">data</span><span class="op">]</span></div>
<div class="ln" style="left:16px;top:364px"><span class="ad">.text:0805012E                 </span><span class="mn">mov     </span><span class="op">[eax+</span><span class="gv">8</span><span class="op">], edx</span></div>
<div class="ln" style="left:16px;top:377px"><span class="ad">.text:08050131                 </span><span class="mn">mov     </span><span class="op">eax, [ebp+</span><span class="gv">data</span><span class="op">]</span></div>
<div class="ln" style="left:16px;top:390px"><span class="ad">.text:08050134                 </span><span class="mn">mov     </span><span class="op">edx, [eax]</span></div>
<div class="ln" style="left:16px;top:403px"><span class="ad">.text:08050136                 </span><span class="mn">mov     </span><span class="op">eax, [ebp+</span><span class="gv">data</span><span class="op">]</span></div>
<div class="ln" style="left:16px;top:416px"><span class="ad">.text:08050139                 </span><span class="mn">mov     </span><span class="op">eax, [eax+</span><span class="gv">8</span><span class="op">]</span></div>
<div class="ln" style="left:16px;top:429px"><span class="ad">.text:0805013C                 </span><span class="mn">lea     </span><span class="op">eax, [edx+eax]</span></div>
<div class="ln" style="left:16px;top:442px"><span class="ad">.text:0805013F                 </span><span class="mn">mov     </span><span class="op">byte ptr [eax], </span><span class="gv">0</span></div>
<div class="ln" style="left:16px;top:455px"><span class="ad">.text:08050142                 </span><span class="mn">leave   </span></div>
<div class="ln" style="left:16px;top:468px"><span class="ad">.text:08050143                 </span><span class="mn">retn    </span></div>
<div class="ln" style="left:16px;top:481px"><span class="ad">.text:08050143 </span><span class="en">esb_appendn_internal endp</span></div>
<div class="ln" style="left:16px;top:494px"><span class="ad">.text:08050143</span></div>
<div class="ln" style="left:16px;top:507px"><span class="ad">.text:08050144</span></div>
</div>
<div class="t" style="left:404px;top:660.18px;font-size:13.2px;color:#505050;font-weight:normal;font-family:'Liberation Mono', monospace;;transform:scaleY(0.86);transform-origin:0 11.52px">00008118 08050118: esb_appendn_internal+8D (Synchronized with Hex View-1)</div>
<div class="b" style="left:1165px;top:137px;width:14px;height:538px;background:#e2e2e2;border-left:1px solid #bdbdbd"></div>
<div class="b" style="left:1166px;top:137px;width:13px;height:13px;background:linear-gradient(90deg,#fdfdfd,#f2f2f2);border-bottom:1px solid #bdbdbd"></div>
<svg style="left:1169px;top:142px" width="7" height="4" viewBox="0 0 7 4"><path d="M0 4h7L3.5 0z" fill="#505050"/></svg>
<div class="b" style="left:1166px;top:662px;width:13px;height:13px;background:linear-gradient(90deg,#fdfdfd,#f2f2f2);border-top:1px solid #bdbdbd"></div>
<svg style="left:1169px;top:667px" width="7" height="4" viewBox="0 0 7 4"><path d="M0 0h7L3.5 4z" fill="#505050"/></svg>
<div class="b" style="left:1166px;top:190px;width:13px;height:28px;background:linear-gradient(90deg,#ffffff,#f0f0f0);border-top:1px solid #bdbdbd;border-bottom:1px solid #bdbdbd"></div>
<div class="b" style="left:402px;top:676px;width:763px;height:14px;background:#e2e2e2;border-top:1px solid #bdbdbd"></div>
<div class="b" style="left:402px;top:677px;width:14px;height:13px;background:linear-gradient(#fdfdfd,#f0f0f0);border-right:1px solid #bdbdbd"></div>
<svg style="left:407px;top:680px" width="4" height="7" viewBox="0 0 4 7"><path d="M4 0v7L0 3.5z" fill="#505050"/></svg>
<div class="b" style="left:416px;top:677px;width:608px;height:13px;background:linear-gradient(#ffffff,#efefef);border-right:1px solid #bdbdbd"></div>
<div class="b" style="left:1151px;top:677px;width:14px;height:13px;background:linear-gradient(#fdfdfd,#f0f0f0);border-left:1px solid #bdbdbd"></div>
<svg style="left:1156px;top:680px" width="4" height="7" viewBox="0 0 4 7"><path d="M0 0v7L4 3.5z" fill="#505050"/></svg>
<div class="b" style="left:1165px;top:676px;width:14px;height:14px;background:#efefef;border-top:1px solid #bdbdbd;border-left:1px solid #bdbdbd"></div>
<div class="b" style="left:0px;top:695px;width:1180px;height:30px;background:#efefef;border:1px solid #c4c4c4"></div>
<svg style="left:5px;top:701px" width="14" height="16" viewBox="0 0 14 16"><linearGradient id="outb" x1="0" y1="0" x2="1" y2="0"><stop offset="0" stop-color="#20c8c0"/><stop offset=".5" stop-color="#1a70d0"/><stop offset="1" stop-color="#0a18b0"/></linearGradient><rect x="0.6" y="0.6" width="12.8" height="14.8" fill="#fbfdff" stroke="#56626e" stroke-width="1.2"/><rect x="0" y="0" width="14" height="3.2" fill="url(#outb)"/><rect x="2.5" y="4.5" width="9" height="9" fill="#eaf2ff"/><path d="M3 6.6h8M3 8.6h8M3 10.6h8M3 12.6h8" stroke="#3e4650" stroke-width="1.1"/></svg>
<div class="t" style="left:26px;top:701.15px;font-size:14px;color:#000;font-weight:normal;font-family:'Liberation Sans', sans-serif;">Output</div>
<svg style="left:1109px;top:705px" width="10" height="11" viewBox="0 0 10 11"><rect x="0.5" y="0.5" width="9" height="10" fill="none" stroke="#5a5a5a"/><rect x="0" y="0" width="10" height="2" fill="#5a5a5a"/></svg><svg style="left:1134px;top:705px" width="11" height="11" viewBox="0 0 11 11"><rect x="0.5" y="0.5" width="10" height="10" rx="2.5" fill="none" stroke="#6a6a6a"/><rect x="4.5" y="2.5" width="4" height="4" fill="none" stroke="#6a6a6a"/><rect x="2.5" y="4.5" width="4" height="4" fill="#efefef" stroke="#6a6a6a"/></svg><svg style="left:1160px;top:705px" width="11" height="11" viewBox="0 0 11 11"><rect x="0.5" y="0.5" width="10" height="10" rx="2.5" fill="none" stroke="#6a6a6a"/><path d="M3 3L8 8M8 3L3 8" stroke="#555" stroke-width="2"/></svg>
<div class="b" style="left:0px;top:727px;width:1180px;height:26px;background:#fff;border:1px solid #c4c4c4"></div>
<div class="t" style="left:8px;top:737.54px;font-size:13px;color:#000;font-weight:bold;font-family:'Liberation Mono', monospace;;transform:scaleY(0.9);transform-origin:0 11.46px">[VulFi] Scan done!</div>
<div class="b" style="left:1165px;top:728px;width:14px;height:24px;background:#f4f4f4;border-left:1px solid #d0d0d0"></div>
<svg style="left:1168px;top:731px" width="8" height="5" viewBox="0 0 8 5"><path d="M0 5h8L4 0z" fill="#505050"/></svg>
<svg style="left:1168px;top:743px" width="8" height="5" viewBox="0 0 8 5"><path d="M0 0h8L4 5z" fill="#505050"/></svg>
<div class="b" style="left:1px;top:754px;width:64px;height:23px;background:linear-gradient(#fafafa,#e8e8e8);border:1px solid #b8b8b8;border-radius:3px"></div>
<div class="t" style="left:11px;top:757.15px;font-size:14px;color:#000;font-weight:normal;font-family:'Liberation Sans', sans-serif;">Python</div>
<div class="b" style="left:68px;top:754px;width:1110px;height:22px;background:#fff;border:1px solid #b8b8b8;border-radius:3px"></div>
<div class="t" style="left:2px;top:781.84px;font-size:13px;color:#202020;font-weight:normal;font-family:'Liberation Mono', monospace;;transform:scaleY(0.86);transform-origin:0 11.46px">AU:  idle   Down      Disk: 91GB</div>
<div class="b" style="left:152px;top:397px;width:1px;height:1px;background:#a8a8a8"></div>
<div class="b" style="left:583px;top:100px;width:1px;height:1px;background:#a8a8a8"></div>
<div class="b" style="left:583px;top:692px;width:1px;height:1px;background:#a8a8a8"></div>
<div class="b" style="left:320px;top:391px;width:1px;height:1px;background:#a8a8a8"></div>
<div class="b" style="left:399px;top:407px;width:1px;height:1px;background:#a8a8a8"></div>
<div class="b" style="left:155px;top:397px;width:1px;height:1px;background:#a8a8a8"></div>
<div class="b" style="left:586px;top:100px;width:1px;height:1px;background:#a8a8a8"></div>
<div class="b" style="left:586px;top:692px;width:1px;height:1px;background:#a8a8a8"></div>
<div class="b" style="left:320px;top:394px;width:1px;height:1px;background:#a8a8a8"></div>
<div class="b" style="left:399px;top:410px;width:1px;height:1px;background:#a8a8a8"></div>
<div class="b" style="left:158px;top:397px;width:1px;height:1px;background:#a8a8a8"></div>
<div class="b" style="left:589px;top:100px;width:1px;height:1px;background:#a8a8a8"></div>
<div class="b" style="left:589px;top:692px;width:1px;height:1px;background:#a8a8a8"></div>
<div class="b" style="left:320px;top:397px;width:1px;height:1px;background:#a8a8a8"></div>
<div class="b" style="left:399px;top:413px;width:1px;height:1px;background:#a8a8a8"></div>
<div class="b" style="left:161px;top:397px;width:1px;height:1px;background:#a8a8a8"></div>
<div class="b" style="left:592px;top:100px;width:1px;height:1px;background:#a8a8a8"></div>
<div class="b" style="left:592px;top:692px;width:1px;height:1px;background:#a8a8a8"></div>
<div class="b" style="left:320px;top:400px;width:1px;height:1px;background:#a8a8a8"></div>
<div class="b" style="left:399px;top:416px;width:1px;height:1px;background:#a8a8a8"></div>
<div class="b" style="left:164px;top:397px;width:1px;height:1px;background:#a8a8a8"></div>
<div class="b" style="left:595px;top:100px;width:1px;height:1px;background:#a8a8a8"></div>
<div class="b" style="left:595px;top:692px;width:1px;height:1px;background:#a8a8a8"></div>
<div class="b" style="left:320px;top:403px;width:1px;height:1px;background:#a8a8a8"></div>
<div class="b" style="left:399px;top:419px;width:1px;height:1px;background:#a8a8a8"></div>
<div class="b" style="left:167px;top:397px;width:1px;height:1px;background:#a8a8a8"></div>
<div class="b" style="left:598px;top:100px;width:1px;height:1px;background:#a8a8a8"></div>
<div class="b" style="left:598px;top:692px;width:1px;height:1px;background:#a8a8a8"></div>
<div class="b" style="left:320px;top:406px;width:1px;height:1px;background:#a8a8a8"></div>
<div class="b" style="left:399px;top:422px;width:1px;height:1px;background:#a8a8a8"></div>
<div class="b" style="left:1177px;top:788px;width:1px;height:1px;background:#a0a0a0"></div>
<div class="b" style="left:1177px;top:791px;width:1px;height:1px;background:#a0a0a0"></div>
<div class="b" style="left:1174px;top:791px;width:1px;height:1px;background:#a0a0a0"></div>
<div class="b" style="left:1177px;top:794px;width:1px;height:1px;background:#a0a0a0"></div>
<div class="b" style="left:1174px;top:794px;width:1px;height:1px;background:#a0a0a0"></div>
<div class="b" style="left:1171px;top:794px;width:1px;height:1px;background:#a0a0a0"></div>
<div class="b" style="left:1177px;top:797px;width:1px;height:1px;background:#a0a0a0"></div>
<div class="b" style="left:1174px;top:797px;width:1px;height:1px;background:#a0a0a0"></div>
<div class="b" style="left:1171px;top:797px;width:1px;height:1px;background:#a0a0a0"></div>
<div class="b" style="left:1168px;top:797px;width:1px;height:1px;background:#a0a0a0"></div>
<div class="b" style="left:401px;top:690px;width:779px;height:1px;background:#bdbdbd"></div>
<div class="b" style="left:1179px;top:136px;width:1px;height:555px;background:#bdbdbd"></div>
</body></html>
